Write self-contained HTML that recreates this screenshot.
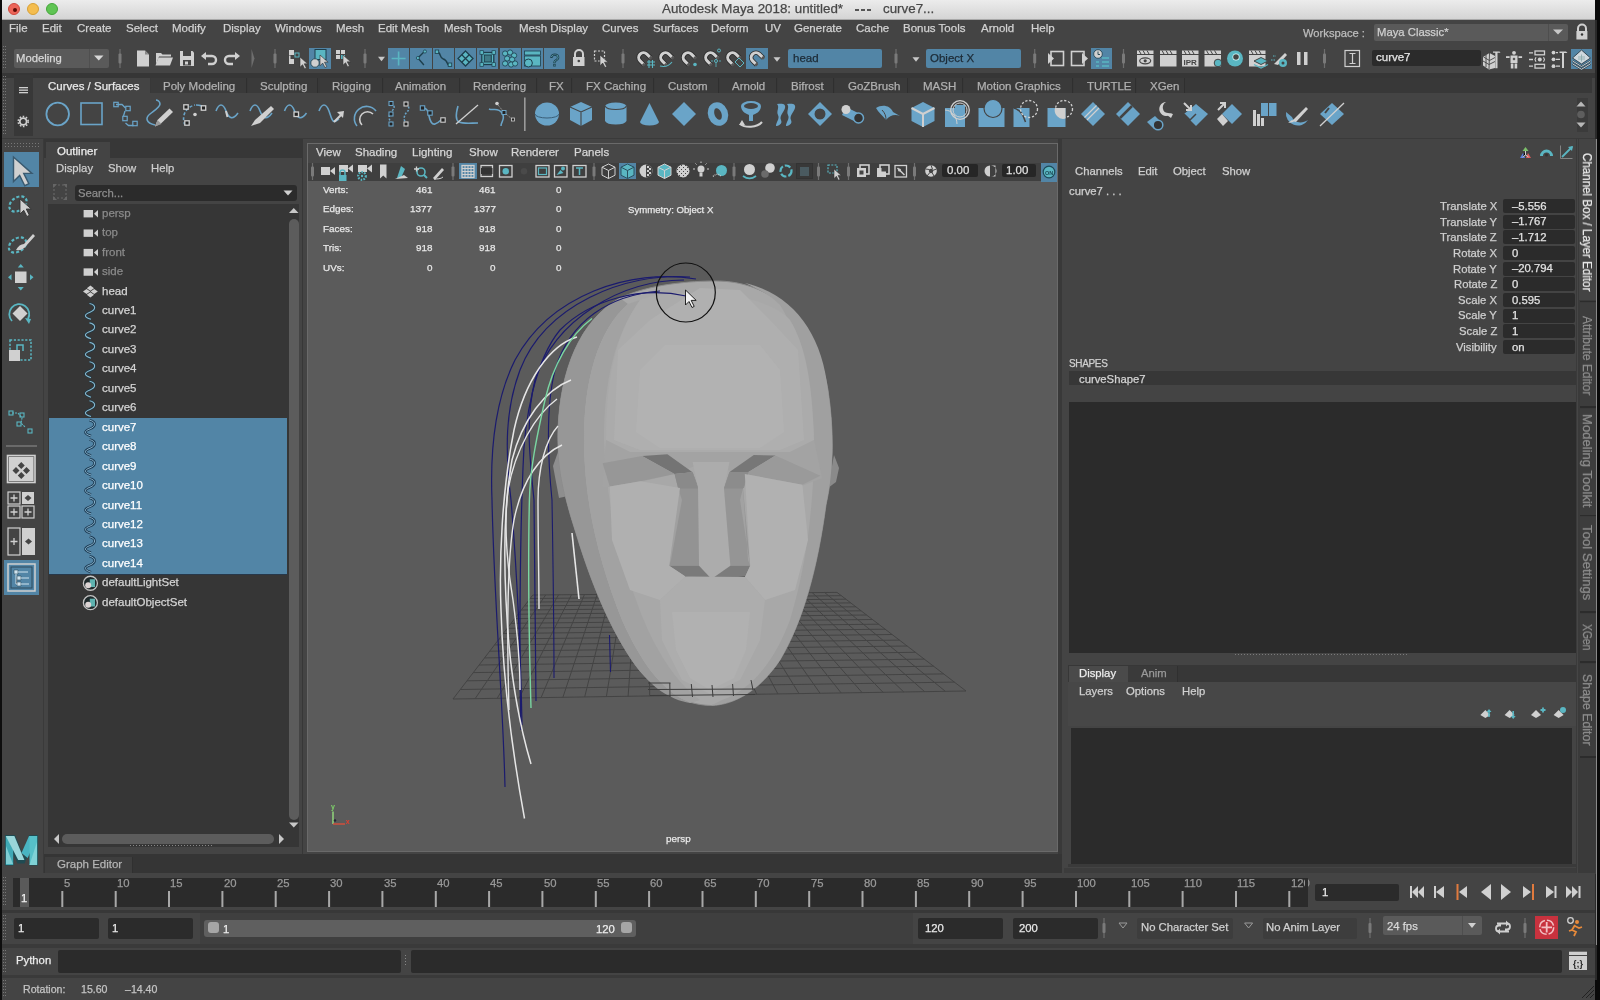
<!DOCTYPE html>
<html><head><meta charset="utf-8">
<style>
*{margin:0;padding:0;box-sizing:border-box}
html,body{width:1600px;height:1000px;overflow:hidden;background:#444;font-family:"Liberation Sans",sans-serif;font-size:11.3px;color:#c8c8c8}
.a{position:absolute}
.t{position:absolute;white-space:nowrap;line-height:1;-webkit-text-stroke:0.25px currentColor;will-change:transform}
svg{position:absolute;left:0;top:0;overflow:visible}
</style></head>
<body>
<div class="a" style="left:0px;top:0px;width:1600px;height:1000px;background:#444;"></div>
<div class="a" style="left:0px;top:0px;width:1595px;height:20px;background:linear-gradient(#ececec,#d3d3d3);"></div>
<div class="a" style="left:0px;top:19px;width:1595px;height:1px;background:#a8a8a8;"></div>
<div class="a" style="left:8px;top:3px;width:12px;height:12px;border-radius:50%;background:#ec6559;border:0.5px solid #d0493e"><div class="a" style="left:3.5px;top:3.5px;width:4px;height:4px;border-radius:50%;background:#5a0b05"></div></div>
<div class="a" style="left:27px;top:3px;width:12px;height:12px;border-radius:50%;background:#f4bd4f;border:0.5px solid #d8a035"></div>
<div class="a" style="left:46px;top:3px;width:12px;height:12px;border-radius:50%;background:#5fc453;border:0.5px solid #45a63a"></div>
<div class="t" style="left:662px;top:2.30px;font-size:13.35px;color:#484848;">Autodesk Maya 2018: untitled*</div>
<div class="a" style="left:854.5px;top:9.3px;width:4px;height:1.3px;background:#555"></div><div class="a" style="left:860.5px;top:9.3px;width:4px;height:1.3px;background:#555"></div><div class="a" style="left:866.5px;top:9.3px;width:4px;height:1.3px;background:#555"></div>
<div class="t" style="left:882.5px;top:2.30px;font-size:13.35px;color:#484848;">curve7...</div>
<div class="a" style="left:0px;top:0px;width:2px;height:1000px;background:#0e0e0e;"></div>
<div class="a" style="left:1595px;top:0px;width:5px;height:1000px;background:#0a0a0a;"></div>
<div class="a" style="left:1595px;top:20px;width:2px;height:960px;background:#2a2a2a;"></div>
<div class="t" style="left:9px;top:23.27px;font-size:11.5px;color:#d2d2d2;">File</div>
<div class="t" style="left:42px;top:23.27px;font-size:11.5px;color:#d2d2d2;">Edit</div>
<div class="t" style="left:76.75px;top:23.27px;font-size:11.5px;color:#d2d2d2;">Create</div>
<div class="t" style="left:125.75px;top:23.27px;font-size:11.5px;color:#d2d2d2;">Select</div>
<div class="t" style="left:172px;top:23.27px;font-size:11.5px;color:#d2d2d2;">Modify</div>
<div class="t" style="left:222.5px;top:23.27px;font-size:11.5px;color:#d2d2d2;">Display</div>
<div class="t" style="left:275px;top:23.27px;font-size:11.5px;color:#d2d2d2;">Windows</div>
<div class="t" style="left:336.25px;top:23.27px;font-size:11.5px;color:#d2d2d2;">Mesh</div>
<div class="t" style="left:378.25px;top:23.27px;font-size:11.5px;color:#d2d2d2;">Edit Mesh</div>
<div class="t" style="left:444px;top:23.27px;font-size:11.5px;color:#d2d2d2;">Mesh Tools</div>
<div class="t" style="left:518.5px;top:23.27px;font-size:11.5px;color:#d2d2d2;">Mesh Display</div>
<div class="t" style="left:602px;top:23.27px;font-size:11.5px;color:#d2d2d2;">Curves</div>
<div class="t" style="left:652.5px;top:23.27px;font-size:11.5px;color:#d2d2d2;">Surfaces</div>
<div class="t" style="left:711.25px;top:23.27px;font-size:11.5px;color:#d2d2d2;">Deform</div>
<div class="t" style="left:765px;top:23.27px;font-size:11.5px;color:#d2d2d2;">UV</div>
<div class="t" style="left:794px;top:23.27px;font-size:11.5px;color:#d2d2d2;">Generate</div>
<div class="t" style="left:855.5px;top:23.27px;font-size:11.5px;color:#d2d2d2;">Cache</div>
<div class="t" style="left:902.5px;top:23.27px;font-size:11.5px;color:#d2d2d2;">Bonus Tools</div>
<div class="t" style="left:980.5px;top:23.27px;font-size:11.5px;color:#d2d2d2;">Arnold</div>
<div class="t" style="left:1030.5px;top:23.27px;font-size:11.5px;color:#d2d2d2;">Help</div>
<div class="t" style="left:1303px;top:27.52px;font-size:11.2px;color:#bdbdbd;">Workspace :</div>
<div class="a" style="left:1374px;top:24px;width:194px;height:17px;background:#5a5a5a;border-radius:2px"></div>
<div class="a" style="left:1548px;top:24px;width:1px;height:17px;background:#4e4e4e;"></div>
<svg width="1600" height="1000"><path d="M1553 29.5h10l-5 5z" fill="#c8c8c8"/></svg>
<div class="t" style="left:1377px;top:27.43px;font-size:11.3px;color:#cfcfcf;">Maya Classic*</div>
<div class="a" style="left:2px;top:41px;width:1593px;height:31px;background:#444;"></div>
<svg width="1600" height="1000"><path d="M3.5 46.0v24.0" stroke="#777" stroke-width="1" stroke-dasharray="1 2"/><path d="M5.5 46.0v24.0" stroke="#777" stroke-width="1" stroke-dasharray="1 2"/></svg>
<div class="a" style="left:13.5px;top:49px;width:95px;height:19px;background:#5a5a5a;border-radius:2px"></div>
<div class="a" style="left:89px;top:49px;width:1px;height:19px;background:#4f4f4f;"></div>
<svg width="1600" height="1000"><path d="M94 55.5h9.5l-4.75 5z" fill="#d8d8d8"/></svg>
<div class="t" style="left:16px;top:52.93px;font-size:11.3px;color:#d8d8d8;">Modeling</div>
<div class="a" style="left:388.0px;top:48px;width:21.3px;height:21.2px;background:#5285a6;"></div>
<div class="a" style="left:410.3px;top:48px;width:21.3px;height:21.2px;background:#5285a6;"></div>
<div class="a" style="left:432.6px;top:48px;width:21.3px;height:21.2px;background:#5285a6;"></div>
<div class="a" style="left:454.9px;top:48px;width:21.3px;height:21.2px;background:#5285a6;"></div>
<div class="a" style="left:477.2px;top:48px;width:21.3px;height:21.2px;background:#5285a6;"></div>
<div class="a" style="left:499.5px;top:48px;width:21.3px;height:21.2px;background:#5285a6;"></div>
<div class="a" style="left:521.8px;top:48px;width:21.3px;height:21.2px;background:#5285a6;"></div>
<div class="a" style="left:544.1px;top:48px;width:21.3px;height:21.2px;background:#5285a6;"></div>
<div class="a" style="left:309px;top:47.6px;width:21.6px;height:21.6px;background:#5285a6;"></div>
<div class="a" style="left:746px;top:48px;width:22px;height:21px;background:#5285a6;"></div>
<div class="a" style="left:1091px;top:48px;width:21px;height:21px;background:#5285a6;"></div>
<div class="a" style="left:1571px;top:49px;width:21px;height:20px;background:#5285a6;"></div>
<div class="a" style="left:787.5px;top:49px;width:94.5px;height:18.7px;background:#5285a6;border-radius:2px"></div>
<div class="t" style="left:793px;top:52.77px;font-size:11.5px;color:#1d2b36;">head</div>
<div class="a" style="left:926px;top:49px;width:94.6px;height:18.7px;background:#5285a6;border-radius:2px"></div>
<div class="t" style="left:930px;top:52.77px;font-size:11.5px;color:#1d2b36;">Object X</div>
<div class="a" style="left:1372px;top:49.6px;width:108.8px;height:16px;background:#2b2b2b;border-radius:2px"></div>
<div class="t" style="left:1376px;top:52.27px;font-size:11.5px;color:#e6e6e6;">curve7</div>
<div class="a" style="left:2px;top:74px;width:1593px;height:64px;background:#444;"></div>
<div class="a" style="left:2px;top:72.5px;width:1593px;height:5px;background:#363636;"></div>
<svg width="1600" height="1000"><path d="M3.5 76.0v58.0" stroke="#777" stroke-width="1" stroke-dasharray="1 2"/><path d="M5.5 76.0v58.0" stroke="#777" stroke-width="1" stroke-dasharray="1 2"/></svg>
<div class="a" style="left:13.6px;top:75px;width:19.6px;height:61px;background:#383838;"></div>
<svg width="1600" height="1000"><g fill="#d0d0d0"><rect x="19" y="87" width="9" height="1.3"/><rect x="19" y="89.5" width="9" height="1.3"/><rect x="19" y="92" width="9" height="1.3"/></g><circle cx="23.2" cy="121.5" r="3.4" fill="none" stroke="#d0d0d0" stroke-width="1.8"/><circle cx="23.2" cy="121.5" r="5" fill="none" stroke="#d0d0d0" stroke-width="1.6" stroke-dasharray="1.6 1.6"/></svg>
<div class="a" style="left:38px;top:77.5px;width:1554px;height:15.5px;background:#383838;"></div>
<div class="a" style="left:37.5px;top:77.5px;width:112.5px;height:16.5px;background:#444;"></div>
<div class="t" style="left:47.8px;top:80.77px;font-size:11.5px;color:#e8e8e8;">Curves / Surfaces</div>
<div class="a" style="left:150.5px;top:77.5px;width:96.6px;height:15.5px;background:#3a3a3a;border-right:1px solid #2f2f2f"></div>
<div class="t" style="left:163px;top:80.77px;font-size:11.5px;color:#b0b0b0;">Poly Modeling</div>
<div class="a" style="left:248.1px;top:77.5px;width:70.4px;height:15.5px;background:#3a3a3a;border-right:1px solid #2f2f2f"></div>
<div class="t" style="left:259.8px;top:80.77px;font-size:11.5px;color:#b0b0b0;">Sculpting</div>
<div class="a" style="left:319.5px;top:77.5px;width:63px;height:15.5px;background:#3a3a3a;border-right:1px solid #2f2f2f"></div>
<div class="t" style="left:331.6px;top:80.77px;font-size:11.5px;color:#b0b0b0;">Rigging</div>
<div class="a" style="left:383.5px;top:77.5px;width:76px;height:15.5px;background:#3a3a3a;border-right:1px solid #2f2f2f"></div>
<div class="t" style="left:395px;top:80.77px;font-size:11.5px;color:#b0b0b0;">Animation</div>
<div class="a" style="left:460.5px;top:77.5px;width:76px;height:15.5px;background:#3a3a3a;border-right:1px solid #2f2f2f"></div>
<div class="t" style="left:472.8px;top:80.77px;font-size:11.5px;color:#b0b0b0;">Rendering</div>
<div class="a" style="left:537.5px;top:77.5px;width:34.60000000000002px;height:15.5px;background:#3a3a3a;border-right:1px solid #2f2f2f"></div>
<div class="t" style="left:549px;top:80.77px;font-size:11.5px;color:#b0b0b0;">FX</div>
<div class="a" style="left:573.1px;top:77.5px;width:81.10000000000002px;height:15.5px;background:#3a3a3a;border-right:1px solid #2f2f2f"></div>
<div class="t" style="left:585.8px;top:80.77px;font-size:11.5px;color:#b0b0b0;">FX Caching</div>
<div class="a" style="left:655.2px;top:77.5px;width:63.799999999999955px;height:15.5px;background:#3a3a3a;border-right:1px solid #2f2f2f"></div>
<div class="t" style="left:667.8px;top:80.77px;font-size:11.5px;color:#b0b0b0;">Custom</div>
<div class="a" style="left:720.0px;top:77.5px;width:57.10000000000002px;height:15.5px;background:#3a3a3a;border-right:1px solid #2f2f2f"></div>
<div class="t" style="left:731.6px;top:80.77px;font-size:11.5px;color:#b0b0b0;">Arnold</div>
<div class="a" style="left:778.1px;top:77.5px;width:56.19999999999993px;height:15.5px;background:#3a3a3a;border-right:1px solid #2f2f2f"></div>
<div class="t" style="left:790.7px;top:80.77px;font-size:11.5px;color:#b0b0b0;">Bifrost</div>
<div class="a" style="left:835.3px;top:77.5px;width:73.20000000000005px;height:15.5px;background:#3a3a3a;border-right:1px solid #2f2f2f"></div>
<div class="t" style="left:848px;top:80.77px;font-size:11.5px;color:#b0b0b0;">GoZBrush</div>
<div class="a" style="left:909.5px;top:77.5px;width:53.799999999999955px;height:15.5px;background:#3a3a3a;border-right:1px solid #2f2f2f"></div>
<div class="t" style="left:922.5px;top:80.77px;font-size:11.5px;color:#b0b0b0;">MASH</div>
<div class="a" style="left:964.3px;top:77.5px;width:108.70000000000005px;height:15.5px;background:#3a3a3a;border-right:1px solid #2f2f2f"></div>
<div class="t" style="left:977px;top:80.77px;font-size:11.5px;color:#b0b0b0;">Motion Graphics</div>
<div class="a" style="left:1074.0px;top:77.5px;width:61.90000000000009px;height:15.5px;background:#3a3a3a;border-right:1px solid #2f2f2f"></div>
<div class="t" style="left:1086.7px;top:80.77px;font-size:11.5px;color:#b0b0b0;">TURTLE</div>
<div class="a" style="left:1136.9px;top:77.5px;width:48.19999999999982px;height:15.5px;background:#3a3a3a;border-right:1px solid #2f2f2f"></div>
<div class="t" style="left:1149.5px;top:80.77px;font-size:11.5px;color:#b0b0b0;">XGen</div>
<div class="a" style="left:38px;top:93px;width:1540px;height:1px;background:#444;"></div>
<div class="a" style="left:1576.5px;top:98px;width:11.5px;height:33.5px;background:#3b3b3b;"></div>
<svg width="1600" height="1000"><path d="M1576.5 106.5h9l-4.5-5z" fill="#b8b8b8"/><circle cx="1581" cy="114.5" r="3.8" fill="#5e5e5e"/><path d="M1576.5 122.5h9l-4.5 5z" fill="#b8b8b8"/></svg>
<div class="a" style="left:2px;top:137.5px;width:1593px;height:2px;background:#3a3a3a;"></div>
<div class="a" style="left:2px;top:139px;width:41px;height:734px;background:#444;"></div>
<div class="a" style="left:43px;top:139px;width:1px;height:734px;background:#3a3a3a;"></div>
<svg width="1600" height="1000"><path d="M5.0 143.5h34.0" stroke="#777" stroke-width="1" stroke-dasharray="1 2"/><path d="M5.0 146.5h34.0" stroke="#777" stroke-width="1" stroke-dasharray="1 2"/></svg>
<div class="a" style="left:4px;top:152px;width:35px;height:35px;background:#5285a6;"></div>
<div class="a" style="left:4px;top:560px;width:35px;height:35px;background:#5285a6;"></div>
<div class="a" style="left:6px;top:445px;width:31px;height:1.5px;background:#6a6a6a;"></div>
<div class="a" style="left:44px;top:139px;width:260px;height:716px;background:#444;"></div>
<div class="a" style="left:44px;top:139px;width:258px;height:19px;background:#373737;"></div>
<div class="a" style="left:46px;top:142px;width:64px;height:17px;background:#444;"></div>
<div class="t" style="left:57px;top:145.77px;font-size:11.5px;color:#ececec;">Outliner</div>
<div class="t" style="left:55.5px;top:163.43px;font-size:11.3px;color:#cdcdcd;">Display</div>
<div class="t" style="left:107.5px;top:163.43px;font-size:11.3px;color:#cdcdcd;">Show</div>
<div class="t" style="left:150.5px;top:163.43px;font-size:11.3px;color:#cdcdcd;">Help</div>
<div class="a" style="left:75px;top:184.5px;width:222px;height:16.5px;background:#2b2b2b;border-radius:3px"></div>
<div class="t" style="left:78px;top:187.93px;font-size:11.3px;color:#8d8d8d;">Search...</div>
<svg width="1600" height="1000"><path d="M283.5 190.5h9l-4.5 5z" fill="#d0d0d0"/></svg>
<div class="a" style="left:48px;top:203.5px;width:241px;height:631px;background:#363636;"></div>
<div class="a" style="left:289px;top:203.5px;width:10px;height:631px;background:#363636;"></div>
<div class="a" style="left:288.5px;top:219px;width:10px;height:600.5px;background:#5c5c5c;border-radius:5px"></div>
<div class="a" style="left:48px;top:831px;width:251px;height:16px;background:#363636;"></div>
<svg width="1600" height="1000"><path d="M289 213h9.5l-4.75-5z" fill="#c8c8c8"/><path d="M289 822.5h9.5l-4.75 5z" fill="#c8c8c8"/><path d="M59 834v10l-5-5z" fill="#c8c8c8"/><path d="M279 834v10l5-5z" fill="#c8c8c8"/></svg>
<div class="a" style="left:61.6px;top:834px;width:212.5px;height:10px;background:#5c5c5c;border-radius:5px"></div>
<svg width="1600" height="1000"><path d="M130.0 845.5h84.0" stroke="#888" stroke-width="1" stroke-dasharray="1 2"/></svg>
<div class="a" style="left:48.5px;top:418.4px;width:238.5px;height:156.6px;background:#5285a6;border-bottom:1px solid #27384a"></div>
<div class="t" style="left:101.5px;top:207.77px;font-size:11.5px;color:#8a8a8a;">persp</div>
<div class="t" style="left:101.5px;top:227.22px;font-size:11.5px;color:#8a8a8a;">top</div>
<div class="t" style="left:101.5px;top:246.67px;font-size:11.5px;color:#8a8a8a;">front</div>
<div class="t" style="left:101.5px;top:266.12px;font-size:11.5px;color:#8a8a8a;">side</div>
<div class="t" style="left:101.5px;top:285.57px;font-size:11.5px;color:#d4d4d4;">head</div>
<div class="t" style="left:101.5px;top:305.02px;font-size:11.5px;color:#d4d4d4;">curve1</div>
<div class="t" style="left:101.5px;top:324.47px;font-size:11.5px;color:#d4d4d4;">curve2</div>
<div class="t" style="left:101.5px;top:343.92px;font-size:11.5px;color:#d4d4d4;">curve3</div>
<div class="t" style="left:101.5px;top:363.37px;font-size:11.5px;color:#d4d4d4;">curve4</div>
<div class="t" style="left:101.5px;top:382.82px;font-size:11.5px;color:#d4d4d4;">curve5</div>
<div class="t" style="left:101.5px;top:402.27px;font-size:11.5px;color:#d4d4d4;">curve6</div>
<div class="t" style="left:101.5px;top:421.72px;font-size:11.5px;color:#ffffff;">curve7</div>
<div class="t" style="left:101.5px;top:441.17px;font-size:11.5px;color:#ffffff;">curve8</div>
<div class="t" style="left:101.5px;top:460.62px;font-size:11.5px;color:#ffffff;">curve9</div>
<div class="t" style="left:101.5px;top:480.07px;font-size:11.5px;color:#ffffff;">curve10</div>
<div class="t" style="left:101.5px;top:499.52px;font-size:11.5px;color:#ffffff;">curve11</div>
<div class="t" style="left:101.5px;top:518.97px;font-size:11.5px;color:#ffffff;">curve12</div>
<div class="t" style="left:101.5px;top:538.42px;font-size:11.5px;color:#ffffff;">curve13</div>
<div class="t" style="left:101.5px;top:557.87px;font-size:11.5px;color:#ffffff;">curve14</div>
<div class="t" style="left:101.5px;top:577.32px;font-size:11.5px;color:#d4d4d4;">defaultLightSet</div>
<div class="t" style="left:101.5px;top:596.77px;font-size:11.5px;color:#d4d4d4;">defaultObjectSet</div>
<div class="a" style="left:302px;top:139px;width:1px;height:716px;background:#373737;"></div>
<div class="a" style="left:303px;top:139px;width:759px;height:716px;background:#444;"></div>
<div class="a" style="left:307px;top:143px;width:751px;height:709px;background:#6a6a6a;"></div>
<div class="a" style="left:308px;top:144px;width:749px;height:707px;background:#5b5b5b;"></div>
<div class="a" style="left:308px;top:144px;width:749px;height:18.5px;background:#474747;"></div>
<div class="a" style="left:308px;top:162.5px;width:749px;height:18.5px;background:#3f3f3f;"></div>
<div class="t" style="left:315.9px;top:147.27px;font-size:11.5px;color:#d6d6d6;">View</div>
<div class="t" style="left:354.7px;top:147.27px;font-size:11.5px;color:#d6d6d6;">Shading</div>
<div class="t" style="left:411.5px;top:147.27px;font-size:11.5px;color:#d6d6d6;">Lighting</div>
<div class="t" style="left:469px;top:147.27px;font-size:11.5px;color:#d6d6d6;">Show</div>
<div class="t" style="left:511.3px;top:147.27px;font-size:11.5px;color:#d6d6d6;">Renderer</div>
<div class="t" style="left:573.6px;top:147.27px;font-size:11.5px;color:#d6d6d6;">Panels</div>
<div class="a" style="left:942px;top:164.3px;width:35.5px;height:12.4px;background:#262626;border-radius:2px"></div>
<div class="t" style="left:947px;top:165.27px;font-size:11.5px;color:#e0e0e0;">0.00</div>
<div class="a" style="left:1001.7px;top:164.3px;width:34.8px;height:12.4px;background:#262626;border-radius:2px"></div>
<div class="t" style="left:1006px;top:165.27px;font-size:11.5px;color:#e0e0e0;">1.00</div>
<div class="a" style="left:1040.8px;top:163px;width:16.5px;height:18.5px;background:#5285a6;"></div>
<div class="a" style="left:459px;top:163.4px;width:17.6px;height:16px;background:#5285a6;"></div>
<div class="a" style="left:619px;top:163.4px;width:17px;height:16px;background:#5285a6;"></div>
<div class="a" style="left:796.3px;top:163.4px;width:16.7px;height:16px;background:#383838;border:1px solid #333"></div>
<div class="a" style="left:1062px;top:139px;width:516px;height:526px;background:#444;"></div>
<div class="a" style="left:1058px;top:139px;width:4px;height:716px;background:#393939;"></div>
<div class="t" style="left:1075px;top:166.43px;font-size:11.3px;color:#d0d0d0;">Channels</div>
<div class="t" style="left:1138px;top:166.43px;font-size:11.3px;color:#d0d0d0;">Edit</div>
<div class="t" style="left:1172.5px;top:166.43px;font-size:11.3px;color:#d0d0d0;">Object</div>
<div class="t" style="left:1221.5px;top:166.43px;font-size:11.3px;color:#d0d0d0;">Show</div>
<div class="t" style="left:1069px;top:186.43px;font-size:11.3px;color:#d0d0d0;">curve7 . . .</div>
<div class="a" style="left:1503px;top:199.0px;width:72px;height:14.2px;background:#2b2b2b;border-radius:2px"></div>
<div class="t" style="right:103px;top:200.93px;font-size:11.3px;color:#cfcfcf;text-align:right;">Translate X</div>
<div class="t" style="left:1511.5px;top:200.73px;font-size:11.3px;color:#e2e2e2;">&#8211;5.556</div>
<div class="a" style="left:1503px;top:214.65px;width:72px;height:14.2px;background:#2b2b2b;border-radius:2px"></div>
<div class="t" style="right:103px;top:216.58px;font-size:11.3px;color:#cfcfcf;text-align:right;">Translate Y</div>
<div class="t" style="left:1511.5px;top:216.38px;font-size:11.3px;color:#e2e2e2;">&#8211;1.767</div>
<div class="a" style="left:1503px;top:230.3px;width:72px;height:14.2px;background:#2b2b2b;border-radius:2px"></div>
<div class="t" style="right:103px;top:232.23px;font-size:11.3px;color:#cfcfcf;text-align:right;">Translate Z</div>
<div class="t" style="left:1511.5px;top:232.03px;font-size:11.3px;color:#e2e2e2;">&#8211;1.712</div>
<div class="a" style="left:1503px;top:245.95px;width:72px;height:14.2px;background:#2b2b2b;border-radius:2px"></div>
<div class="t" style="right:103px;top:247.88px;font-size:11.3px;color:#cfcfcf;text-align:right;">Rotate X</div>
<div class="t" style="left:1511.5px;top:247.68px;font-size:11.3px;color:#e2e2e2;">0</div>
<div class="a" style="left:1503px;top:261.6px;width:72px;height:14.2px;background:#2b2b2b;border-radius:2px"></div>
<div class="t" style="right:103px;top:263.53px;font-size:11.3px;color:#cfcfcf;text-align:right;">Rotate Y</div>
<div class="t" style="left:1511.5px;top:263.33px;font-size:11.3px;color:#e2e2e2;">&#8211;20.794</div>
<div class="a" style="left:1503px;top:277.25px;width:72px;height:14.2px;background:#2b2b2b;border-radius:2px"></div>
<div class="t" style="right:103px;top:279.18px;font-size:11.3px;color:#cfcfcf;text-align:right;">Rotate Z</div>
<div class="t" style="left:1511.5px;top:278.98px;font-size:11.3px;color:#e2e2e2;">0</div>
<div class="a" style="left:1503px;top:292.9px;width:72px;height:14.2px;background:#2b2b2b;border-radius:2px"></div>
<div class="t" style="right:103px;top:294.83px;font-size:11.3px;color:#cfcfcf;text-align:right;">Scale X</div>
<div class="t" style="left:1511.5px;top:294.63px;font-size:11.3px;color:#e2e2e2;">0.595</div>
<div class="a" style="left:1503px;top:308.55px;width:72px;height:14.2px;background:#2b2b2b;border-radius:2px"></div>
<div class="t" style="right:103px;top:310.48px;font-size:11.3px;color:#cfcfcf;text-align:right;">Scale Y</div>
<div class="t" style="left:1511.5px;top:310.28px;font-size:11.3px;color:#e2e2e2;">1</div>
<div class="a" style="left:1503px;top:324.2px;width:72px;height:14.2px;background:#2b2b2b;border-radius:2px"></div>
<div class="t" style="right:103px;top:326.13px;font-size:11.3px;color:#cfcfcf;text-align:right;">Scale Z</div>
<div class="t" style="left:1511.5px;top:325.93px;font-size:11.3px;color:#e2e2e2;">1</div>
<div class="a" style="left:1503px;top:339.85px;width:72px;height:14.2px;background:#2b2b2b;border-radius:2px"></div>
<div class="t" style="right:103px;top:341.78px;font-size:11.3px;color:#cfcfcf;text-align:right;">Visibility</div>
<div class="t" style="left:1511.5px;top:341.58px;font-size:11.3px;color:#e2e2e2;">on</div>
<div class="t" style="left:1069.4px;top:358.84px;font-size:10px;color:#d0d0d0;letter-spacing:-0.35px">SHAPES</div>
<div class="a" style="left:1068.75px;top:371px;width:507px;height:14px;background:#373737;"></div>
<div class="t" style="left:1079.4px;top:373.73px;font-size:11.3px;color:#d4d4d4;">curveShape7</div>
<div class="a" style="left:1068.75px;top:402px;width:507px;height:250.5px;background:#2b2b2b;"></div>
<svg width="1600" height="1000"><path d="M1235.0 654.5h172.0" stroke="#7a7a7a" stroke-width="1" stroke-dasharray="1 2"/></svg>
<div class="a" style="left:1062px;top:665px;width:516px;height:208px;background:#444;"></div>
<div class="a" style="left:1068px;top:665px;width:508px;height:16.5px;background:#373737;"></div>
<div class="a" style="left:1069.4px;top:665.5px;width:58.6px;height:16px;background:#4a4a4a;"></div>
<div class="a" style="left:1128px;top:666px;width:49.5px;height:15.5px;background:#3a3a3a;border-right:1px solid #303030"></div>
<div class="t" style="left:1079.4px;top:668.43px;font-size:11.3px;color:#ececec;">Display</div>
<div class="t" style="left:1140.6px;top:668.43px;font-size:11.3px;color:#9a9a9a;">Anim</div>
<div class="a" style="left:1067.5px;top:681.5px;width:508px;height:44px;background:#474747;"></div>
<div class="t" style="left:1078.5px;top:686.43px;font-size:11.3px;color:#d0d0d0;">Layers</div>
<div class="t" style="left:1126px;top:686.43px;font-size:11.3px;color:#d0d0d0;">Options</div>
<div class="t" style="left:1182px;top:686.43px;font-size:11.3px;color:#d0d0d0;">Help</div>
<div class="a" style="left:1071px;top:728px;width:501px;height:136px;background:#2b2b2b;"></div>
<div class="a" style="left:1067.5px;top:864px;width:508px;height:3px;background:#3a3a3a;"></div>
<div class="a" style="left:1064px;top:868px;width:514px;height:5px;background:#3c3c3c;"></div>
<div class="a" style="left:1576px;top:139px;width:20px;height:735px;background:#3a3a3a;"></div>
<div class="a" style="left:1577px;top:139px;width:1px;height:735px;background:#464646;"></div>
<div class="a" style="left:1578.5px;top:139px;width:17px;height:161px;background:#444;"></div>
<div class="a" style="left:1579.5px;top:303.1px;width:16px;height:103.59999999999997px;background:#3d3d3d;"></div>
<div class="a" style="left:1579.5px;top:408.7px;width:16px;height:106.40000000000003px;background:#3d3d3d;"></div>
<div class="a" style="left:1579.5px;top:517.1px;width:16px;height:94.39999999999998px;background:#3d3d3d;"></div>
<div class="a" style="left:1579.5px;top:613.5px;width:16px;height:48px;background:#3d3d3d;"></div>
<div class="a" style="left:1579.5px;top:663.5px;width:16px;height:93px;background:#3d3d3d;"></div>
<div class="a" style="left:1579.5px;top:300.8px;width:16px;height:1.6px;background:#2c2c2c;"></div>
<div class="a" style="left:1579.5px;top:406.4px;width:16px;height:1.6px;background:#2c2c2c;"></div>
<div class="a" style="left:1579.5px;top:514.8000000000001px;width:16px;height:1.6px;background:#2c2c2c;"></div>
<div class="a" style="left:1579.5px;top:611.2px;width:16px;height:1.6px;background:#2c2c2c;"></div>
<div class="a" style="left:1579.5px;top:661.2px;width:16px;height:1.6px;background:#2c2c2c;"></div>
<div class="a" style="left:1579.5px;top:756.2px;width:16px;height:1.6px;background:#2c2c2c;"></div>
<div class="t" style="left:1593px;top:152.6px;font-size:12px;color:#e8e8e8;transform-origin:0 0;transform:rotate(90deg) scaleX(0.965)">Channel Box / Layer Editor</div>
<div class="t" style="left:1593px;top:316px;font-size:12px;color:#8c8c8c;transform-origin:0 0;transform:rotate(90deg) scaleX(0.997)">Attribute Editor</div>
<div class="t" style="left:1593px;top:414.4px;font-size:12px;color:#8c8c8c;transform-origin:0 0;transform:rotate(90deg) scaleX(1.088)">Modeling Toolkit</div>
<div class="t" style="left:1593px;top:524.7px;font-size:12px;color:#8c8c8c;transform-origin:0 0;transform:rotate(90deg) scaleX(1.096)">Tool Settings</div>
<div class="t" style="left:1593px;top:623.6px;font-size:12px;color:#8c8c8c;transform-origin:0 0;transform:rotate(90deg) scaleX(0.860)">XGen</div>
<div class="t" style="left:1593px;top:674.2px;font-size:12px;color:#8c8c8c;transform-origin:0 0;transform:rotate(90deg) scaleX(1.030)">Shape Editor</div>
<div class="a" style="left:1595.5px;top:139px;width:1.2px;height:806px;background:#8a8a8a;"></div>
<svg width="1600" height="1000"><rect x="83.6" y="210.0" width="9.4" height="7.4" fill="#cfcfcf"/><path d="M94 213.7l4-3.7v7.4z" fill="#cfcfcf"/><rect x="83.6" y="229.45" width="9.4" height="7.4" fill="#cfcfcf"/><path d="M94 233.14999999999998l4-3.7v7.4z" fill="#cfcfcf"/><rect x="83.6" y="248.9" width="9.4" height="7.4" fill="#cfcfcf"/><path d="M94 252.6l4-3.7v7.4z" fill="#cfcfcf"/><rect x="83.6" y="268.34999999999997" width="9.4" height="7.4" fill="#cfcfcf"/><path d="M94 272.04999999999995l4-3.7v7.4z" fill="#cfcfcf"/><path d="M90.4 285.59999999999997l3.6 2.6-3.6 2.6-3.6-2.6z" fill="#cfcfcf"/><path d="M86.60000000000001 288.9l3.6 2.6-3.6 2.6-3.6-2.6z" fill="#cfcfcf"/><path d="M94.2 288.9l3.6 2.6-3.6 2.6-3.6-2.6z" fill="#cfcfcf"/><path d="M90.4 292.2l3.6 2.6-3.6 2.6-3.6-2.6z" fill="#cfcfcf"/><path d="M89.5 303.45C96.5 304.95 96 309.95 90 312.15S83.5 316.95 91 319.34999999999997" fill="none" stroke="#203844" stroke-width="2.4"/><path d="M89.5 303.45C96.5 304.95 96 309.95 90 312.15S83.5 316.95 91 319.34999999999997" fill="none" stroke="#86b8cf" stroke-width="1.1"/><path d="M89.5 322.9C96.5 324.4 96 329.4 90 331.59999999999997S83.5 336.4 91 338.79999999999995" fill="none" stroke="#203844" stroke-width="2.4"/><path d="M89.5 322.9C96.5 324.4 96 329.4 90 331.59999999999997S83.5 336.4 91 338.79999999999995" fill="none" stroke="#86b8cf" stroke-width="1.1"/><path d="M89.5 342.35C96.5 343.85 96 348.85 90 351.05S83.5 355.85 91 358.25" fill="none" stroke="#203844" stroke-width="2.4"/><path d="M89.5 342.35C96.5 343.85 96 348.85 90 351.05S83.5 355.85 91 358.25" fill="none" stroke="#86b8cf" stroke-width="1.1"/><path d="M89.5 361.79999999999995C96.5 363.29999999999995 96 368.29999999999995 90 370.49999999999994S83.5 375.29999999999995 91 377.69999999999993" fill="none" stroke="#203844" stroke-width="2.4"/><path d="M89.5 361.79999999999995C96.5 363.29999999999995 96 368.29999999999995 90 370.49999999999994S83.5 375.29999999999995 91 377.69999999999993" fill="none" stroke="#86b8cf" stroke-width="1.1"/><path d="M89.5 381.25C96.5 382.75 96 387.75 90 389.95S83.5 394.75 91 397.15" fill="none" stroke="#203844" stroke-width="2.4"/><path d="M89.5 381.25C96.5 382.75 96 387.75 90 389.95S83.5 394.75 91 397.15" fill="none" stroke="#86b8cf" stroke-width="1.1"/><path d="M89.5 400.7C96.5 402.2 96 407.2 90 409.4S83.5 414.2 91 416.59999999999997" fill="none" stroke="#203844" stroke-width="2.4"/><path d="M89.5 400.7C96.5 402.2 96 407.2 90 409.4S83.5 414.2 91 416.59999999999997" fill="none" stroke="#86b8cf" stroke-width="1.1"/><path d="M89.5 420.15C96.5 421.65 96 426.65 90 428.84999999999997S83.5 433.65 91 436.04999999999995" fill="none" stroke="#1d3a52" stroke-width="2.6"/><path d="M89.5 420.15C96.5 421.65 96 426.65 90 428.84999999999997S83.5 433.65 91 436.04999999999995" fill="none" stroke="#8fbcd6" stroke-width="0.9"/><path d="M89.5 439.59999999999997C96.5 441.09999999999997 96 446.09999999999997 90 448.29999999999995S83.5 453.09999999999997 91 455.49999999999994" fill="none" stroke="#1d3a52" stroke-width="2.6"/><path d="M89.5 439.59999999999997C96.5 441.09999999999997 96 446.09999999999997 90 448.29999999999995S83.5 453.09999999999997 91 455.49999999999994" fill="none" stroke="#8fbcd6" stroke-width="0.9"/><path d="M89.5 459.04999999999995C96.5 460.54999999999995 96 465.54999999999995 90 467.74999999999994S83.5 472.54999999999995 91 474.94999999999993" fill="none" stroke="#1d3a52" stroke-width="2.6"/><path d="M89.5 459.04999999999995C96.5 460.54999999999995 96 465.54999999999995 90 467.74999999999994S83.5 472.54999999999995 91 474.94999999999993" fill="none" stroke="#8fbcd6" stroke-width="0.9"/><path d="M89.5 478.5C96.5 480.0 96 485.0 90 487.2S83.5 492.0 91 494.4" fill="none" stroke="#1d3a52" stroke-width="2.6"/><path d="M89.5 478.5C96.5 480.0 96 485.0 90 487.2S83.5 492.0 91 494.4" fill="none" stroke="#8fbcd6" stroke-width="0.9"/><path d="M89.5 497.95C96.5 499.45 96 504.45 90 506.65S83.5 511.45 91 513.85" fill="none" stroke="#1d3a52" stroke-width="2.6"/><path d="M89.5 497.95C96.5 499.45 96 504.45 90 506.65S83.5 511.45 91 513.85" fill="none" stroke="#8fbcd6" stroke-width="0.9"/><path d="M89.5 517.4C96.5 518.9 96 523.9 90 526.1S83.5 530.9 91 533.3" fill="none" stroke="#1d3a52" stroke-width="2.6"/><path d="M89.5 517.4C96.5 518.9 96 523.9 90 526.1S83.5 530.9 91 533.3" fill="none" stroke="#8fbcd6" stroke-width="0.9"/><path d="M89.5 536.8499999999999C96.5 538.3499999999999 96 543.3499999999999 90 545.55S83.5 550.3499999999999 91 552.7499999999999" fill="none" stroke="#1d3a52" stroke-width="2.6"/><path d="M89.5 536.8499999999999C96.5 538.3499999999999 96 543.3499999999999 90 545.55S83.5 550.3499999999999 91 552.7499999999999" fill="none" stroke="#8fbcd6" stroke-width="0.9"/><path d="M89.5 556.3C96.5 557.8 96 562.8 90 565.0S83.5 569.8 91 572.1999999999999" fill="none" stroke="#1d3a52" stroke-width="2.6"/><path d="M89.5 556.3C96.5 557.8 96 562.8 90 565.0S83.5 569.8 91 572.1999999999999" fill="none" stroke="#8fbcd6" stroke-width="0.9"/><circle cx="90.4" cy="583.25" r="7" fill="#1f2a2c" stroke="#c4c4c4" stroke-width="1.3"/><rect x="89.8" y="579.25" width="5.2" height="7.8" fill="#5fb3b0"/><circle cx="88.2" cy="585.25" r="3" fill="#ddd5d5"/><circle cx="90.4" cy="602.7" r="7" fill="#1f2a2c" stroke="#c4c4c4" stroke-width="1.3"/><rect x="89.8" y="598.7" width="5.2" height="7.8" fill="#5fb3b0"/><circle cx="88.2" cy="604.7" r="3" fill="#ddd5d5"/><rect x="54" y="185" width="12" height="13" fill="none" stroke="#666" stroke-width="1.2" stroke-dasharray="2 2"/><path d="M53 184l4 0-4 4zM67 184l-4 0 4 4zM53 200l4 0-4-4zM67 200l-4 0 4-4z" fill="#666"/></svg>
<div class="a" style="left:44px;top:853.75px;width:1018px;height:20px;background:#353535;"></div>
<div class="a" style="left:45px;top:857px;width:88px;height:16.75px;background:#3e3e3e;border-right:1px solid #303030"></div>
<div class="t" style="left:57px;top:859.27px;font-size:11.5px;color:#b4b4b4;">Graph Editor</div>
<div class="a" style="left:2px;top:872.5px;width:1593px;height:1px;background:#3a3a3a;"></div>
<div class="a" style="left:2px;top:873px;width:1593px;height:38px;background:#444;"></div>
<svg width="1600" height="1000"><path d="M3.5 877.0v30.0" stroke="#777" stroke-width="1" stroke-dasharray="1 2"/><path d="M5.5 877.0v30.0" stroke="#777" stroke-width="1" stroke-dasharray="1 2"/></svg>
<div class="a" style="left:12.75px;top:877.7px;width:1295px;height:29.3px;background:#2b2b2b;"></div>
<div class="a" style="left:19.5px;top:877.7px;width:9.3px;height:29.3px;background:#5a5a5a;"></div>
<div class="t" style="left:20.5px;top:893.43px;font-size:11.3px;color:#f0f0f0;">1</div>
<div class="t" style="left:63.6px;top:878.43px;font-size:11.3px;color:#999">5</div>
<div class="t" style="left:117.0px;top:878.43px;font-size:11.3px;color:#999">10</div>
<div class="t" style="left:170.3px;top:878.43px;font-size:11.3px;color:#999">15</div>
<div class="t" style="left:223.7px;top:878.43px;font-size:11.3px;color:#999">20</div>
<div class="t" style="left:277.0px;top:878.43px;font-size:11.3px;color:#999">25</div>
<div class="t" style="left:330.4px;top:878.43px;font-size:11.3px;color:#999">30</div>
<div class="t" style="left:383.7px;top:878.43px;font-size:11.3px;color:#999">35</div>
<div class="t" style="left:437.1px;top:878.43px;font-size:11.3px;color:#999">40</div>
<div class="t" style="left:490.4px;top:878.43px;font-size:11.3px;color:#999">45</div>
<div class="t" style="left:543.7px;top:878.43px;font-size:11.3px;color:#999">50</div>
<div class="t" style="left:597.1px;top:878.43px;font-size:11.3px;color:#999">55</div>
<div class="t" style="left:650.4px;top:878.43px;font-size:11.3px;color:#999">60</div>
<div class="t" style="left:703.8px;top:878.43px;font-size:11.3px;color:#999">65</div>
<div class="t" style="left:757.1px;top:878.43px;font-size:11.3px;color:#999">70</div>
<div class="t" style="left:810.5px;top:878.43px;font-size:11.3px;color:#999">75</div>
<div class="t" style="left:863.8px;top:878.43px;font-size:11.3px;color:#999">80</div>
<div class="t" style="left:917.2px;top:878.43px;font-size:11.3px;color:#999">85</div>
<div class="t" style="left:970.5px;top:878.43px;font-size:11.3px;color:#999">90</div>
<div class="t" style="left:1023.9px;top:878.43px;font-size:11.3px;color:#999">95</div>
<div class="t" style="left:1077.2px;top:878.43px;font-size:11.3px;color:#999">100</div>
<div class="t" style="left:1130.6px;top:878.43px;font-size:11.3px;color:#999">105</div>
<div class="t" style="left:1183.9px;top:878.43px;font-size:11.3px;color:#999">110</div>
<div class="t" style="left:1237.3px;top:878.43px;font-size:11.3px;color:#999">115</div>
<div class="t" style="left:1290.6px;top:878.43px;font-size:11.3px;color:#999">120</div>
<svg width="1600" height="1000"><rect x="61.3" y="891" width="2" height="16" fill="#a8a8a8"/><rect x="114.7" y="891" width="2" height="16" fill="#a8a8a8"/><rect x="168.0" y="891" width="2" height="16" fill="#a8a8a8"/><rect x="221.4" y="891" width="2" height="16" fill="#a8a8a8"/><rect x="274.7" y="891" width="2" height="16" fill="#a8a8a8"/><rect x="328.1" y="891" width="2" height="16" fill="#a8a8a8"/><rect x="381.4" y="891" width="2" height="16" fill="#a8a8a8"/><rect x="434.8" y="891" width="2" height="16" fill="#a8a8a8"/><rect x="488.1" y="891" width="2" height="16" fill="#a8a8a8"/><rect x="541.4" y="891" width="2" height="16" fill="#a8a8a8"/><rect x="594.8" y="891" width="2" height="16" fill="#a8a8a8"/><rect x="648.1" y="891" width="2" height="16" fill="#a8a8a8"/><rect x="701.5" y="891" width="2" height="16" fill="#a8a8a8"/><rect x="754.8" y="891" width="2" height="16" fill="#a8a8a8"/><rect x="808.2" y="891" width="2" height="16" fill="#a8a8a8"/><rect x="861.5" y="891" width="2" height="16" fill="#a8a8a8"/><rect x="914.9" y="891" width="2" height="16" fill="#a8a8a8"/><rect x="968.2" y="891" width="2" height="16" fill="#a8a8a8"/><rect x="1021.6" y="891" width="2" height="16" fill="#a8a8a8"/><rect x="1075.0" y="891" width="2" height="16" fill="#a8a8a8"/><rect x="1128.3" y="891" width="2" height="16" fill="#a8a8a8"/><rect x="1181.6" y="891" width="2" height="16" fill="#a8a8a8"/><rect x="1235.0" y="891" width="2" height="16" fill="#a8a8a8"/><rect x="1288.3" y="891" width="2" height="16" fill="#a8a8a8"/></svg>
<div class="a" style="left:1305px;top:877.7px;width:3px;height:29.3px;background:#2b2b2b;"></div>
<div class="a" style="left:1315px;top:884px;width:84px;height:16.5px;background:#2b2b2b;border-radius:2px"></div>
<div class="t" style="left:1322px;top:887.43px;font-size:11.3px;color:#e8e8e8;">1</div>
<div class="a" style="left:2px;top:910px;width:1593px;height:2.5px;background:#383838;"></div>
<div class="a" style="left:2px;top:913px;width:1593px;height:31px;background:#444;"></div>
<svg width="1600" height="1000"><path d="M3.5 915.0v27.0" stroke="#777" stroke-width="1" stroke-dasharray="1 2"/><path d="M5.5 915.0v27.0" stroke="#777" stroke-width="1" stroke-dasharray="1 2"/></svg>
<div class="a" style="left:14.25px;top:917.5px;width:84.75px;height:21px;background:#2b2b2b;border-radius:2px"></div>
<div class="t" style="left:18px;top:922.93px;font-size:11.3px;color:#e8e8e8;">1</div>
<div class="a" style="left:108px;top:917.5px;width:84.5px;height:21px;background:#2b2b2b;border-radius:2px"></div>
<div class="t" style="left:112px;top:922.93px;font-size:11.3px;color:#e8e8e8;">1</div>
<div class="a" style="left:200px;top:913px;width:712.5px;height:31px;background:#3f3f3f;"></div>
<div class="a" style="left:204px;top:919.5px;width:432px;height:17.2px;background:#5f5f5f;border-radius:3px"></div>
<div class="a" style="left:207.5px;top:921.5px;width:11.5px;height:11.5px;background:#a6a6a6;border-radius:3px"></div>
<div class="t" style="left:223px;top:923.93px;font-size:11.3px;color:#ececec;">1</div>
<div class="t" style="left:596px;top:923.93px;font-size:11.3px;color:#ececec;">120</div>
<div class="a" style="left:620.6px;top:921.5px;width:11.5px;height:11.5px;background:#a6a6a6;border-radius:3px"></div>
<div class="a" style="left:918.4px;top:917.5px;width:85px;height:21px;background:#2b2b2b;border-radius:2px"></div>
<div class="t" style="left:925px;top:922.93px;font-size:11.3px;color:#e8e8e8;">120</div>
<div class="a" style="left:1013px;top:917.5px;width:84.7px;height:21px;background:#2b2b2b;border-radius:2px"></div>
<div class="t" style="left:1019px;top:922.93px;font-size:11.3px;color:#e8e8e8;">200</div>
<div class="a" style="left:1136.5px;top:917.5px;width:96px;height:21px;background:#3d3d3d;border-radius:2px"></div>
<div class="t" style="left:1140.6px;top:922.43px;font-size:11.3px;color:#d0d0d0;">No Character Set</div>
<div class="a" style="left:1262.5px;top:917.5px;width:94.5px;height:21px;background:#3d3d3d;border-radius:2px"></div>
<div class="t" style="left:1266px;top:922.43px;font-size:11.3px;color:#d0d0d0;">No Anim Layer</div>
<div class="a" style="left:1383px;top:916px;width:98.8px;height:19px;background:#5a5a5a;border-radius:2px"></div>
<div class="a" style="left:1462px;top:916px;width:1px;height:19px;background:#4e4e4e;"></div>
<div class="t" style="left:1387px;top:920.93px;font-size:11.3px;color:#d8d8d8;">24 fps</div>
<div class="a" style="left:1535.4px;top:916px;width:22.6px;height:22.7px;background:#c8323e;"></div>
<div class="a" style="left:2px;top:944px;width:1593px;height:4px;background:#3a3a3a;"></div>
<div class="a" style="left:2px;top:948px;width:1593px;height:27px;background:#444;"></div>
<svg width="1600" height="1000"><path d="M3.5 950.0v23.0" stroke="#777" stroke-width="1" stroke-dasharray="1 2"/><path d="M5.5 950.0v23.0" stroke="#777" stroke-width="1" stroke-dasharray="1 2"/></svg>
<div class="t" style="left:15.75px;top:954.73px;font-size:11.3px;color:#ececec;">Python</div>
<div class="a" style="left:57.75px;top:950px;width:342.75px;height:22.5px;background:#2b2b2b;border-radius:2px"></div>
<div class="a" style="left:410.6px;top:950px;width:1151.8px;height:22.5px;background:#2b2b2b;border-radius:2px"></div>
<svg width="1600" height="1000"><path d="M405.5 955.0v12.0" stroke="#888" stroke-width="1" stroke-dasharray="1 2"/></svg>
<div class="a" style="left:2px;top:975px;width:1593px;height:3px;background:#3a3a3a;"></div>
<div class="a" style="left:2px;top:978px;width:1593px;height:22px;background:#444;"></div>
<svg width="1600" height="1000"><path d="M3.5 980.0v18.0" stroke="#777" stroke-width="1" stroke-dasharray="1 2"/><path d="M5.5 980.0v18.0" stroke="#777" stroke-width="1" stroke-dasharray="1 2"/></svg>
<div class="t" style="left:23.25px;top:984.03px;font-size:10.6px;color:#c4c4c4;">Rotation:</div>
<div class="t" style="left:81px;top:984.03px;font-size:10.6px;color:#c4c4c4;">15.60</div>
<div class="t" style="left:125px;top:984.03px;font-size:10.6px;color:#c4c4c4;">&#8211;14.40</div>
<svg width="1600" height="1000" style="clip-path:inset(181px 543px 149px 308px)"><path d="M532.8 595.0L453.0 699.0M545.7 594.9L475.1 698.7M558.6 594.8L497.2 698.3M571.5 594.7L519.2 698.0M584.4 594.6L541.1 697.6M597.2 594.4L562.9 697.3M610.1 594.3L584.7 696.9M622.9 594.2L606.4 696.6M635.6 594.1L628.1 696.3M648.4 594.0L649.7 695.9M661.1 593.9L671.2 695.6M673.8 593.8L692.7 695.3M686.5 593.7L714.1 694.9M699.2 593.6L735.4 694.6M711.8 593.5L756.7 694.3M724.4 593.4L777.9 693.9M737.0 593.3L799.0 693.6M749.6 593.1L820.1 693.3M762.1 593.0L841.1 692.9M774.7 592.9L862.1 692.6M787.2 592.8L883.0 692.3M799.7 592.7L903.8 692.0M812.1 592.6L924.6 691.6M824.6 592.5L945.3 691.3M837.0 592.4L966.0 691.0M532.8 595.0L837.0 592.4M530.1 598.5L841.4 595.7M527.3 602.1L845.9 599.2M524.4 605.9L850.7 602.9M521.3 610.0L855.8 606.8M518.1 614.2L861.1 610.8M514.7 618.6L866.6 615.0M511.1 623.3L872.5 619.5M507.3 628.3L878.7 624.2M503.3 633.5L885.2 629.2M499.0 639.0L892.1 634.5M494.5 644.9L899.4 640.1M489.7 651.2L907.2 646.0M484.6 657.9L915.4 652.3M479.1 665.0L924.2 659.1M473.3 672.6L933.6 666.2M467.0 680.8L943.6 673.9M460.3 689.5L954.4 682.1M453.0 699.0L966.0 691.0" stroke="#444444" stroke-width="1" fill="none"/><path d="M553 466L558 452L566 458L568 496L559 498Z" fill="#8e8e8e"/><path d="M834 455L839 468L836 482L828 488Z" fill="#8a8a8a"/><path d="M716 281C770 281 815 318 828 390C834 430 834 470 826 505C818 565 804 620 780 660C760 690 735 705 711 705.5C685 705 655 690 636 666C610 630 590 580 575 530C562 490 557 460 558 430C560 370 580 320 620 298C650 284 690 281 716 281Z" fill="#a8a8a8" stroke="#8a8a8a" stroke-width="1"/><path d="M558 430C560 370 580 320 620 298L628 304C598 330 584 380 584 440C584 500 598 560 622 620C640 660 660 690 690 703C670 700 650 686 636 666C610 630 590 580 575 530C562 490 557 460 558 430Z" fill="#979797"/><path d="M628 304C598 330 584 380 584 440C584 500 598 560 622 620C640 660 660 690 690 703L700 700C672 680 650 640 636 600C618 550 606 500 604 440C604 380 615 335 640 300Z" fill="#a2a2a2"/><path d="M745 283C795 295 822 335 828 390C834 430 834 470 826 505C818 565 804 620 780 660C760 690 735 705 711 705.5L722 700C752 690 775 660 790 620C805 570 812 520 814 460C815 410 808 350 780 305C770 295 760 290 745 283Z" fill="#a0a0a0"/><path d="M640 300C670 288 760 288 790 320C805 345 812 380 814 440L790 452L630 452L606 440C606 380 615 335 640 300Z" fill="#ababab"/><path d="M650 320L770 320L798 350L804 440L780 450L640 450L614 440L618 350Z" fill="#afafaf"/><path d="M665 345L760 345L780 370L784 432L760 448L660 448L636 432L640 370Z" fill="#b2b2b2"/><path d="M700 288L740 290L770 320L650 320Z" fill="#b0b0b0"/><path d="M606 440L630 452L790 452L814 440L822 478L802 486L744 474L700 464L675 474L640 482L602 488Z" fill="#a3a3a3"/><path d="M642.2 456L667.4 454.2L692.6 472.2L674.6 474Z" fill="#747474"/><path d="M753.8 455L775.4 455.5L748.4 472L729.5 472Z" fill="#777777"/><path d="M602.6 463.2L642 456L674.6 474L640.4 481.2L609.8 486.6Z" fill="#979797"/><path d="M775.4 455.5L820.4 475.8L802.4 484.8L744.8 474L748.4 472Z" fill="#9a9a9a"/><path d="M674.6 474L692.6 472.2L699 488.4L680 488Z" fill="#8c8c8c"/><path d="M729.5 472L748.4 472L744 488L724 488Z" fill="#8e8e8e"/><path d="M692.6 462L729.5 462L724 488L730.4 565.8L711.5 579L699 565.8L698 488Z" fill="#acacac"/><path d="M674.6 474L692.6 472.2L698 488.4L699 565.8L669.2 565.8L678.2 488.4Z" fill="#939393"/><path d="M674.6 474L692.6 472.2L698 488.4L678.2 488.4Z" fill="#8a8a8a"/><path d="M678.2 488.4L682 500L671 560L669.2 565.8Z" fill="#a0a0a0"/><path d="M729.5 472L748.4 472L743 488.4L750.2 565.8L730.4 565.8L724 488.4Z" fill="#959595"/><path d="M729.5 472L748.4 472L743 488.4L724 488.4Z" fill="#8c8c8c"/><path d="M743 488.4L748 560L750.2 565.8L740 500Z" fill="#a2a2a2"/><path d="M669.2 565.8L699 565.8L711.5 579L685.4 576.6Z" fill="#7a7a7a"/><path d="M730.4 565.8L750.2 565.8L745 577L711.5 579Z" fill="#7c7c7c"/><path d="M685 577L711.5 579.5L745 577" fill="none" stroke="#3a3a3a" stroke-width="0.8"/><path d="M609.8 486.6L640.4 481.2L680 488L669.2 565.8L685.4 576.6L660 600L630 590L612 540Z" fill="#b0b0b0"/><path d="M744.8 474L802.4 484.8L808 540L795 590L765 600L745 577L750.2 565.8Z" fill="#b1b1b1"/><path d="M660 600L685.4 576.6L745 577L765 600L760 640L740 680L710 694L682 680L662 640Z" fill="#adadad"/><path d="M672 612L750 612L746 650L734 678L710 690L690 678L676 650Z" fill="#b1b1b1"/><path d="M648 683L670.5 683M648 689.5L755 689M650 695.5L755 694.5M669.8 683L670 697M691.3 684L692.5 697M712 685L713 697M732.6 684L733.5 696M751 680L753 690" stroke="#3c3c3c" stroke-width="1" fill="none"/><path d="M696 279C630 268 550 295 515 360C495 400 490 450 492 500C494 600 503 700 505 787" stroke="#1b1b6e" stroke-width="1.2" fill="none"/><path d="M690 277C625 272 545 305 520 370C505 410 505 450 511 500C516 560 520 620 522 725" stroke="#1b1b6e" stroke-width="1.2" fill="none"/><path d="M684 280C620 280 555 320 535 380C525 420 530 460 534 500C535 560 535 640 536 701" stroke="#1b1b6e" stroke-width="1.2" fill="none"/><path d="M686 296C640 286 590 300 560 330C535 360 524 420 523 468C520 540 519 650 521 730" stroke="#1b1b6e" stroke-width="1.2" fill="none"/><path d="M660 291C610 295 570 320 555 370C545 410 548 460 552 500C553 560 554 620 554 678" stroke="#1b1b6e" stroke-width="1.1" fill="none"/><path d="M609.5 635L610.5 672" stroke="#1b1b6e" stroke-width="1.1" fill="none"/><path d="M577 337C550 345 525 380 514 430C502 490 499 560 501 610C503 680 512 750 524.5 818.5" stroke="#e6e6e6" stroke-width="1.5" fill="none"/><path d="M571 380C545 390 522 420 512 460C503 510 504 560 506 600C508 650 515 710 531 764" stroke="#e6e6e6" stroke-width="1.5" fill="none"/><path d="M557 399C535 415 515 450 508 490C503 530 508 570 513 600C517 630 520 660 520 690" stroke="#e6e6e6" stroke-width="1.4" fill="none"/><path d="M558 426C545 440 538 470 538 500C538 540 539 580 539 609" stroke="#e6e6e6" stroke-width="1.4" fill="none"/><path d="M562 445C540 455 522 480 514 520C507 560 507 640 509 710" stroke="#e6e6e6" stroke-width="1.4" fill="none"/><path d="M572 533L579 599" stroke="#e6e6e6" stroke-width="1.6" fill="none"/><path d="M592 318.5C570 335 553 365 545 400C536 440 530 470 529.4 500C528 560 529 640 531 708" stroke="#7ad6a2" stroke-width="1.4" fill="none"/><circle cx="685.8" cy="292.5" r="29.5" fill="none" stroke="#111" stroke-width="1.2"/><path d="M685.5 290v15l3.5-3.5 3 6 2.2-1.1-3-6h5z" fill="#f2f2f2" stroke="#111" stroke-width="0.9"/><path d="M333 811.5v12.5" stroke="#8ed07a" stroke-width="1.6"/><path d="M333 824h12" stroke="#d9503c" stroke-width="1.4"/><circle cx="335" cy="820.5" r="1.2" fill="#223"/><text x="333" y="809" font-size="7" font-weight="bold" font-family="Liberation Sans" text-anchor="middle" fill="#7fd46a">y</text><text x="347.6" y="823.5" font-size="7" font-weight="bold" font-family="Liberation Sans" text-anchor="middle" fill="#e04030">x</text></svg>
<div class="t" style="left:322.5px;top:184.87px;font-size:9.9px;color:#e8e8e8;">Verts:</div>
<div class="t" style="right:1168px;top:184.87px;font-size:9.9px;color:#e8e8e8;text-align:right;">461</div>
<div class="t" style="right:1104.5px;top:184.87px;font-size:9.9px;color:#e8e8e8;text-align:right;">461</div>
<div class="t" style="right:1039px;top:184.87px;font-size:9.9px;color:#e8e8e8;text-align:right;">0</div>
<div class="t" style="left:322.5px;top:204.37px;font-size:9.9px;color:#e8e8e8;">Edges:</div>
<div class="t" style="right:1168px;top:204.37px;font-size:9.9px;color:#e8e8e8;text-align:right;">1377</div>
<div class="t" style="right:1104.5px;top:204.37px;font-size:9.9px;color:#e8e8e8;text-align:right;">1377</div>
<div class="t" style="right:1039px;top:204.37px;font-size:9.9px;color:#e8e8e8;text-align:right;">0</div>
<div class="t" style="left:322.5px;top:223.87px;font-size:9.9px;color:#e8e8e8;">Faces:</div>
<div class="t" style="right:1168px;top:223.87px;font-size:9.9px;color:#e8e8e8;text-align:right;">918</div>
<div class="t" style="right:1104.5px;top:223.87px;font-size:9.9px;color:#e8e8e8;text-align:right;">918</div>
<div class="t" style="right:1039px;top:223.87px;font-size:9.9px;color:#e8e8e8;text-align:right;">0</div>
<div class="t" style="left:322.5px;top:243.37px;font-size:9.9px;color:#e8e8e8;">Tris:</div>
<div class="t" style="right:1168px;top:243.37px;font-size:9.9px;color:#e8e8e8;text-align:right;">918</div>
<div class="t" style="right:1104.5px;top:243.37px;font-size:9.9px;color:#e8e8e8;text-align:right;">918</div>
<div class="t" style="right:1039px;top:243.37px;font-size:9.9px;color:#e8e8e8;text-align:right;">0</div>
<div class="t" style="left:322.5px;top:262.87px;font-size:9.9px;color:#e8e8e8;">UVs:</div>
<div class="t" style="right:1168px;top:262.87px;font-size:9.9px;color:#e8e8e8;text-align:right;">0</div>
<div class="t" style="right:1104.5px;top:262.87px;font-size:9.9px;color:#e8e8e8;text-align:right;">0</div>
<div class="t" style="right:1039px;top:262.87px;font-size:9.9px;color:#e8e8e8;text-align:right;">0</div>
<div class="t" style="left:628px;top:204.87px;font-size:9.6px;color:#e8e8e8;">Symmetry: Object X</div>
<div class="t" style="left:665.5px;top:833.62px;font-size:9.9px;color:#e8e8e8;">persp</div>
<svg width="1600" height="1000"><rect x="119.4" y="49" width="1.2" height="19" fill="#6e6e6e"/><rect x="118.5" y="53.5" width="3" height="10" rx="1" fill="#7a7a7a"/><path d="M137 50.5h8l4 4v12h-12z" fill="#d0d0d0"/><path d="M145 50.5v4h4" fill="#888"/><path d="M156 53h5l1.5 1.5h8.5v2h-12l-3 8z" fill="#d0d0d0"/><path d="M158.5 57.5h14.5l-3 8h-14.5z" fill="#d0d0d0"/><path d="M180 51h12.5l1.5 1.5v13.5h-14z" fill="#d0d0d0"/><rect x="183" y="51" width="8" height="5" fill="#444"/><rect x="183" y="60" width="8" height="5.5" fill="#444"/><rect x="185" y="61.5" width="3" height="3" fill="#d0d0d0"/><path d="M203 56h9a4 4 0 0 1 0 8h-4" fill="none" stroke="#d0d0d0" stroke-width="2.4"/><path d="M201 56l5-4v8z" fill="#d0d0d0"/><path d="M238 56h-9a4 4 0 0 0 0 8h4" fill="none" stroke="#d0d0d0" stroke-width="2.4"/><path d="M240 56l-5-4v8z" fill="#d0d0d0"/><path d="M251.5 49l3 9.5-3 9.5z" fill="#6e6e6e"/><rect x="274.4" y="49" width="1.2" height="19" fill="#6e6e6e"/><rect x="273.5" y="53.5" width="3" height="10" rx="1" fill="#7a7a7a"/><rect x="289" y="50" width="5" height="5" fill="#d0d0d0"/><rect x="289" y="59" width="5" height="5" fill="#d0d0d0"/><rect x="289" y="55.5" width="1.5" height="3.5" fill="#d0d0d0"/><rect x="295" y="53" width="4" height="4" fill="none" stroke="#5ab6c2" stroke-width="1"/><path transform="translate(300 57) scale(0.85)" d="M0 0v12l3-3 2.5 5 2-1-2.5-5h4z" fill="#d0d0d0" stroke="#333" stroke-width="0.7"/><rect x="315" y="49.5" width="11" height="10" fill="#5ab6c2" stroke="#1d3f4d" stroke-width="1"/><circle cx="315" cy="63" r="4.2" fill="#d0d0d0" stroke="#1d3f4d" stroke-width="0.8"/><path transform="translate(320 55) scale(0.9)" d="M0 0v12l3-3 2.5 5 2-1-2.5-5h4z" fill="#d0d0d0" stroke="#333" stroke-width="0.7"/><rect x="336" y="50" width="4" height="4" fill="#d0d0d0"/><rect x="341" y="50" width="4" height="4" fill="#d0d0d0"/><rect x="336" y="55" width="4" height="4" fill="#d0d0d0"/><rect x="341" y="55" width="4" height="4" fill="#5ab6c2"/><path transform="translate(343 55) scale(0.85)" d="M0 0v12l3-3 2.5 5 2-1-2.5-5h4z" fill="#d0d0d0" stroke="#333" stroke-width="0.7"/><rect x="364.4" y="49" width="1.2" height="19" fill="#6e6e6e"/><rect x="363.5" y="53.5" width="3" height="10" rx="1" fill="#7a7a7a"/><path d="M378.0 56.75h7l-3.5 4.5z" fill="#c8c8c8"/><path d="M391.6 58.5h14M398.6 51.5v14" stroke="#5ab6c2" stroke-width="1.6"/><path d="M424.90000000000003 51l-7 7 6 7" fill="none" stroke="#1d3f4d" stroke-width="1.4"/><circle cx="424.90000000000003" cy="51.5" r="1.6" fill="#5ab6c2" stroke="#1d3f4d" stroke-width=".7"/><circle cx="417.90000000000003" cy="58" r="1.6" fill="#5ab6c2" stroke="#1d3f4d" stroke-width=".7"/><path d="M437.20000000000005 52c4 0 2 6 6 7s4 5 5 6" fill="none" stroke="#1d3f4d" stroke-width="1.4"/><rect x="435.20000000000005" y="50" width="3.5" height="3.5" fill="#5ab6c2" stroke="#1d3f4d" stroke-width=".8"/><rect x="448.20000000000005" y="63" width="3.5" height="3.5" fill="#5ab6c2" stroke="#1d3f4d" stroke-width=".8"/><path d="M465.5 51l7.5 7.5-7.5 7.5-7.5-7.5z" fill="#5ab6c2" stroke="#1d3f4d" stroke-width="1.3"/><path d="M461.75 54.75l7.5 7.5M469.25 54.75l-7.5 7.5" stroke="#1d3f4d" stroke-width="1.3"/><rect x="481.8" y="52.5" width="12" height="12" fill="#5ab6c2" stroke="#1d3f4d" stroke-width="1.3"/><rect x="484.3" y="55" width="7" height="7" fill="#3f7a86" stroke="#1d3f4d" stroke-width="1"/><rect x="480.0" y="50.7" width="3.6" height="3.6" fill="#5ab6c2" stroke="#1d3f4d" stroke-width=".7"/><rect x="480.0" y="62.7" width="3.6" height="3.6" fill="#5ab6c2" stroke="#1d3f4d" stroke-width=".7"/><rect x="492.0" y="50.7" width="3.6" height="3.6" fill="#5ab6c2" stroke="#1d3f4d" stroke-width=".7"/><rect x="492.0" y="62.7" width="3.6" height="3.6" fill="#5ab6c2" stroke="#1d3f4d" stroke-width=".7"/><circle cx="505.1" cy="53.5" r="2.6" fill="#5ab6c2" stroke="#1d3f4d" stroke-width=".8"/><circle cx="510.1" cy="52.5" r="2.6" fill="#5ab6c2" stroke="#1d3f4d" stroke-width=".8"/><circle cx="514.1" cy="55.5" r="2.6" fill="#5ab6c2" stroke="#1d3f4d" stroke-width=".8"/><circle cx="507.1" cy="58.5" r="2.6" fill="#5ab6c2" stroke="#1d3f4d" stroke-width=".8"/><circle cx="512.1" cy="59.5" r="2.6" fill="#5ab6c2" stroke="#1d3f4d" stroke-width=".8"/><circle cx="505.1" cy="63.5" r="2.6" fill="#5ab6c2" stroke="#1d3f4d" stroke-width=".8"/><circle cx="511.1" cy="64.5" r="2.6" fill="#5ab6c2" stroke="#1d3f4d" stroke-width=".8"/><circle cx="515.1" cy="63.5" r="2.6" fill="#5ab6c2" stroke="#1d3f4d" stroke-width=".8"/><rect x="524.4" y="51" width="16" height="4" fill="#5ab6c2" stroke="#1d3f4d" stroke-width=".8"/><rect x="524.4" y="56" width="16" height="10" fill="#5ab6c2" stroke="#1d3f4d" stroke-width=".8"/><circle cx="528.4" cy="63" r="4" fill="#5ab6c2" stroke="#1d3f4d" stroke-width="1"/><text x="554.7" y="66" font-size="17" font-family="Liberation Sans" text-anchor="middle" fill="#79cfdc" stroke="#1d3f4d" stroke-width="0.9">?</text><path d="M575 57v-3a4 4 0 0 1 8 0v3" fill="none" stroke="#d0d0d0" stroke-width="2"/><rect x="573" y="57" width="11.5" height="9" fill="#d0d0d0"/><circle cx="578.8" cy="61" r="1.3" fill="#444"/><rect x="594.5" y="51" width="10" height="10" fill="none" stroke="#d0d0d0" stroke-width="1.2" stroke-dasharray="2 1.5"/><path transform="translate(600 55) scale(0.9)" d="M0 0v12l3-3 2.5 5 2-1-2.5-5h4z" fill="#d0d0d0" stroke="#333" stroke-width="0.7"/><rect x="622.4" y="49" width="1.2" height="19" fill="#6e6e6e"/><rect x="621.5" y="53.5" width="3" height="10" rx="1" fill="#7a7a7a"/><g transform="translate(643.5 57.5) rotate(-45)"><path d="M-4.8 5.5V0A4.8 4.8 0 0 1 4.8 0V5.5" fill="none" stroke="#2a2a2a" stroke-width="4.6"/><path d="M-4.8 5.5V0A4.8 4.8 0 0 1 4.8 0V5.5" fill="none" stroke="#d0d0d0" stroke-width="3"/><rect x="-6.3" y="4" width="3" height="2.5" fill="#555"/><rect x="3.3" y="4" width="3" height="2.5" fill="#555"/></g><path d="M647 62h8M647 65h8M649 60v8M652.5 60v8" stroke="#5ab6c2" stroke-width="1.1"/><g transform="translate(665.5 57.5) rotate(-45)"><path d="M-4.8 5.5V0A4.8 4.8 0 0 1 4.8 0V5.5" fill="none" stroke="#2a2a2a" stroke-width="4.6"/><path d="M-4.8 5.5V0A4.8 4.8 0 0 1 4.8 0V5.5" fill="none" stroke="#d0d0d0" stroke-width="3"/><rect x="-6.3" y="4" width="3" height="2.5" fill="#555"/><rect x="3.3" y="4" width="3" height="2.5" fill="#555"/></g><path d="M660 66c4 1 9 0 12-4" fill="none" stroke="#5ab6c2" stroke-width="1.1"/><g transform="translate(688 57.5) rotate(-45)"><path d="M-4.8 5.5V0A4.8 4.8 0 0 1 4.8 0V5.5" fill="none" stroke="#2a2a2a" stroke-width="4.6"/><path d="M-4.8 5.5V0A4.8 4.8 0 0 1 4.8 0V5.5" fill="none" stroke="#d0d0d0" stroke-width="3"/><rect x="-6.3" y="4" width="3" height="2.5" fill="#555"/><rect x="3.3" y="4" width="3" height="2.5" fill="#555"/></g><circle cx="695" cy="64.5" r="1.8" fill="#5ab6c2"/><g transform="translate(710.5 57.5) rotate(-45)"><path d="M-4.8 5.5V0A4.8 4.8 0 0 1 4.8 0V5.5" fill="none" stroke="#2a2a2a" stroke-width="4.6"/><path d="M-4.8 5.5V0A4.8 4.8 0 0 1 4.8 0V5.5" fill="none" stroke="#d0d0d0" stroke-width="3"/><rect x="-6.3" y="4" width="3" height="2.5" fill="#555"/><rect x="3.3" y="4" width="3" height="2.5" fill="#555"/></g><circle cx="719" cy="50.5" r="1.5" fill="none" stroke="#5ab6c2"/><circle cx="716" cy="61" r="1.5" fill="none" stroke="#5ab6c2"/><path d="M716 63v4M713 61h-2M719 61h2" stroke="#5ab6c2" stroke-width=".8"/><g transform="translate(732.5 57.5) rotate(-45)"><path d="M-4.8 5.5V0A4.8 4.8 0 0 1 4.8 0V5.5" fill="none" stroke="#2a2a2a" stroke-width="4.6"/><path d="M-4.8 5.5V0A4.8 4.8 0 0 1 4.8 0V5.5" fill="none" stroke="#d0d0d0" stroke-width="3"/><rect x="-6.3" y="4" width="3" height="2.5" fill="#555"/><rect x="3.3" y="4" width="3" height="2.5" fill="#555"/></g><path d="M735 62l4-4 5 5-4 4z" fill="none" stroke="#5ab6c2" stroke-width="1"/><g transform="translate(756 57.5) rotate(-45)"><path d="M-4.8 5.5V0A4.8 4.8 0 0 1 4.8 0V5.5" fill="none" stroke="#2a2a2a" stroke-width="4.6"/><path d="M-4.8 5.5V0A4.8 4.8 0 0 1 4.8 0V5.5" fill="none" stroke="#d0d0d0" stroke-width="3"/><rect x="-6.3" y="4" width="3" height="2.5" fill="#555"/><rect x="3.3" y="4" width="3" height="2.5" fill="#555"/></g><path d="M773.5 57.25h7l-3.5 4.5z" fill="#c8c8c8"/><rect x="895.4" y="49" width="1.2" height="19" fill="#6e6e6e"/><rect x="894.5" y="53.5" width="3" height="10" rx="1" fill="#7a7a7a"/><path d="M912.5 57.25h7l-3.5 4.5z" fill="#c8c8c8"/><rect x="1034.1000000000001" y="49" width="1.2" height="19" fill="#6e6e6e"/><rect x="1033.2" y="53.5" width="3" height="10" rx="1" fill="#7a7a7a"/><rect x="1051" y="51.5" width="12.5" height="14" fill="none" stroke="#d0d0d0" stroke-width="1.6"/><path d="M1048 53l6 5.5-6 5.5z" fill="#d0d0d0"/><rect x="1071.5" y="51.5" width="12.5" height="14" fill="none" stroke="#d0d0d0" stroke-width="1.6"/><path d="M1082 53l6 5.5-6 5.5z" fill="#d0d0d0"/><circle cx="1098" cy="54" r="4.3" fill="#d0d0d0" stroke="#1d3f4d" stroke-width=".8"/><path d="M1098 51.5v3h2" stroke="#1d3f4d" stroke-width=".9" fill="none"/><path d="M1102 58h7M1102 62h7M1102 66h7M1096 62h3M1096 66h3" stroke="#5ab6c2" stroke-width="1.6"/><rect x="1122.9" y="49" width="1.2" height="19" fill="#6e6e6e"/><rect x="1122.0" y="53.5" width="3" height="10" rx="1" fill="#7a7a7a"/><rect x="1137" y="50.5" width="16.5" height="3.5" fill="#d0d0d0"/><path d="M1139 50.5l2 3.5M1143 50.5l2 3.5M1147 50.5l2 3.5" stroke="#444" stroke-width="1"/><rect x="1137" y="55" width="16.5" height="11.5" fill="#d0d0d0"/><ellipse cx="1145.2" cy="60.8" rx="5.5" ry="3" fill="none" stroke="#444" stroke-width="1.2"/><circle cx="1145.2" cy="60.8" r="1.6" fill="#444"/><rect x="1160" y="50.5" width="16.5" height="3.5" fill="#d0d0d0"/><path d="M1162 50.5l2 3.5M1166 50.5l2 3.5M1170 50.5l2 3.5" stroke="#444" stroke-width="1"/><rect x="1160" y="55" width="16.5" height="11.5" fill="#d0d0d0"/><rect x="1182" y="50.5" width="16.5" height="3.5" fill="#d0d0d0"/><path d="M1184 50.5l2 3.5M1188 50.5l2 3.5M1192 50.5l2 3.5" stroke="#444" stroke-width="1"/><rect x="1182" y="55" width="16.5" height="11.5" fill="#d0d0d0"/><text x="1190.2" y="64.5" font-size="8" font-weight="bold" font-family="Liberation Sans" text-anchor="middle" fill="#444">IPR</text><rect x="1204.5" y="50.5" width="16.5" height="3.5" fill="#d0d0d0"/><path d="M1206.5 50.5l2 3.5M1210.5 50.5l2 3.5M1214.5 50.5l2 3.5" stroke="#444" stroke-width="1"/><rect x="1204.5" y="55" width="16.5" height="11.5" fill="#d0d0d0"/><circle cx="1218" cy="63" r="3.8" fill="#5ab6c2" stroke="#444" stroke-width="1"/><circle cx="1235" cy="58.5" r="8" fill="#5ab6c2"/><circle cx="1236" cy="57" r="3.5" fill="#dff"/><circle cx="1236" cy="57" r="2.8" fill="#444"/><rect x="1249" y="50.5" width="16.5" height="3.5" fill="#d0d0d0"/><path d="M1251 50.5l2 3.5M1255 50.5l2 3.5M1259 50.5l2 3.5" stroke="#444" stroke-width="1"/><rect x="1249" y="55" width="16.5" height="11.5" fill="#d0d0d0"/><path d="M1254 61l7-3.5 7 3.5-7 3.5z" fill="#5ab6c2" stroke="#444"/><path d="M1254 64.5l7 3.5 7-3.5" fill="none" stroke="#5ab6c2" stroke-width="1.2"/><path d="M1274 64l11-11 2 2-9 10z" fill="#d0d0d0"/><circle cx="1283" cy="63" r="4" fill="#5ab6c2"/><circle cx="1283" cy="63" r="1.5" fill="#444"/><path d="M1271 60h4M1273 56h3" stroke="#5ab6c2" stroke-width="1" stroke-dasharray="1.5 1"/><rect x="1297" y="52" width="3.5" height="13" fill="#d0d0d0"/><rect x="1304" y="52" width="3.5" height="13" fill="#d0d0d0"/><rect x="1323.9" y="49" width="1.2" height="19" fill="#6e6e6e"/><rect x="1323.0" y="53.5" width="3" height="10" rx="1" fill="#7a7a7a"/><rect x="1345" y="50.5" width="14.5" height="16" fill="none" stroke="#d0d0d0" stroke-width="1.2"/><path d="M1349.5 53.5h6M1349.5 63.5h6M1352.5 53.5v10" stroke="#d0d0d0" stroke-width="1.2"/><path d="M1483 57l6.5-4 5.5 3v12l-6 1.5-6-4z" fill="#d0d0d0"/><path d="M1489.5 53l-0.5 16M1483 61l6 3.5 6-3M1486 55v12M1483.5 57l6 3.5 5.5-3" stroke="#444" stroke-width=".9" fill="none"/><path d="M1493 51.5h6.5l1 1.3h-3v15.5h-2.2v-15.5h-2.3z" fill="#d0d0d0"/><circle cx="1514" cy="52.8" r="1.9" fill="#d0d0d0"/><rect x="1510.5" y="55.5" width="7" height="7.5" fill="#d0d0d0"/><rect x="1506" y="56.2" width="3.6" height="1.8" fill="#d0d0d0"/><rect x="1518.5" y="56.2" width="3.6" height="1.8" fill="#d0d0d0"/><rect x="1510.8" y="63.5" width="2.6" height="5" fill="#d0d0d0"/><rect x="1514.6" y="63.5" width="2.6" height="5" fill="#d0d0d0"/><path d="M1512.5 59l1.5-1.5 1.5 1.5-1.5 1.5z" fill="#444"/><path d="M1529 52.9h4M1529 59.5h4M1529 66.2h4" stroke="#d0d0d0" stroke-width="1.3"/><rect x="1535" y="51" width="9.5" height="3.8" fill="none" stroke="#d0d0d0" stroke-width="1.3"/><rect x="1535" y="64.3" width="9.5" height="3.8" fill="none" stroke="#d0d0d0" stroke-width="1.3"/><circle cx="1539.8" cy="59.5" r="2" fill="#d0d0d0"/><path d="M1536 57.3l-1 2.2 1 2.2M1543.5 57.3l1 2.2-1 2.2" stroke="#d0d0d0" stroke-width="1.1" fill="none"/><circle cx="1553.5" cy="52.6" r="1.9" fill="#d0d0d0"/><circle cx="1553.5" cy="59.3" r="1.9" fill="#d0d0d0"/><circle cx="1553.5" cy="66.2" r="1.9" fill="#d0d0d0"/><path d="M1556 52.6h2M1556 59.3h4M1556 66.2h4" stroke="#d0d0d0" stroke-width="1.2"/><path d="M1559.5 51.5h6.5l1.5 1.5h-3.5v15h-2v-15h-2.5z" fill="#d0d0d0"/><path d="M1581.5 50l9 8-9 6-9-6z" fill="#cfd8de" stroke="#2f3e48" stroke-width="0.9"/><path d="M1578 57h7M1578 59h7M1581.5 54.5v7" stroke="#8aa" stroke-width=".8"/><path d="M1572.5 61l9 5.5 9-5.5M1572.5 63.8l9 5.5 9-5.5" fill="none" stroke="#2f3e48" stroke-width="2"/><path d="M1572.5 61l9 5.5 9-5.5M1572.5 63.8l9 5.5 9-5.5" fill="none" stroke="#d8e2e8" stroke-width="0.9"/><path d="M1578 31v-2.5a4 4 0 0 1 8 0v2.5" fill="none" stroke="#d0d0d0" stroke-width="2"/><rect x="1576.4" y="31" width="11" height="8.5" fill="#d0d0d0"/><circle cx="1582" cy="34.5" r="1.2" fill="#333"/><circle cx="57.7" cy="114" r="11.3" fill="none" stroke="#6aa4c8" stroke-width="1.8"/><rect x="81" y="103" width="21" height="21.5" fill="none" stroke="#6aa4c8" stroke-width="1.6"/><path d="M116 104.5h6l3.5 3.5M125 111l-1.5 5M125.5 123l3 2.5h5" fill="none" stroke="#6aa4c8" stroke-width="1.3"/><rect x="113.8" y="102.3" width="4.4" height="4.4" fill="none" stroke="#6aa4c8" stroke-width="1.2"/><rect x="125.8" y="106.3" width="4.4" height="4.4" fill="none" stroke="#6aa4c8" stroke-width="1.2"/><rect x="122.8" y="116.3" width="4.4" height="4.4" fill="none" stroke="#6aa4c8" stroke-width="1.2"/><rect x="132.8" y="121.3" width="4.4" height="4.4" fill="none" stroke="#6aa4c8" stroke-width="1.2"/><path d="M155 125c-9-2-10-7-5-11s10-7 10-10-3-4-4-4" fill="none" stroke="#6aa4c8" stroke-width="1.6"/><path d="M155 126.5l2.5-6.5 12-11.5 3.5 3.5-12 11.5z" fill="#d0d0d0"/><path d="M155 126.5l2.5-6.5 4 4z" fill="#999"/><path d="M185 125c-3-6-2-17 10-20" fill="none" stroke="#6aa4c8" stroke-width="1.6" stroke-dasharray="3 2"/><path d="M196 105c4 0 7 1 8 3" fill="none" stroke="#6aa4c8" stroke-width="1.6"/><rect x="183.8" y="104.8" width="4.4" height="4.4" fill="#222" stroke="#d0d0d0" stroke-width="1.3"/><rect x="201.3" y="105.8" width="4.4" height="4.4" fill="#222" stroke="#d0d0d0" stroke-width="1.3"/><rect x="184.8" y="120.8" width="4.4" height="4.4" fill="#222" stroke="#d0d0d0" stroke-width="1.3"/><circle cx="195" cy="114.5" r="1.8" fill="#d0d0d0"/><path d="M216 111c3-8 7-8 10 0s7 9 12 2" fill="none" stroke="#6aa4c8" stroke-width="1.6"/><path d="M226 111l1.5 6" stroke="#d0d0d0" stroke-width="2"/><path d="M250 111c3-8 7-8 10 0s7 9 12 2" fill="none" stroke="#6aa4c8" stroke-width="1.6"/><path d="M251 126l4-6 16-14 3 3-14 14z" fill="#d0d0d0"/><path d="M284.5 111c3-8 7-8 10 0s7 9 12 2" fill="none" stroke="#6aa4c8" stroke-width="1.6"/><rect x="294" y="112" width="4.5" height="4.5" fill="#222" stroke="#d0d0d0" stroke-width="1.3"/><path d="M319 111c3-8 7-8 10 0s3 14 10 8" fill="none" stroke="#6aa4c8" stroke-width="1.6"/><path d="M334 122l8-8" stroke="#d0d0d0" stroke-width="2.2"/><path d="M344 111l-1 7-6-6z" fill="#d0d0d0"/><path d="M357 126a11 11 0 0 1 19-15" fill="none" stroke="#6aa4c8" stroke-width="1.6"/><path d="M362 125a7 7 0 0 1 11-11" fill="none" stroke="#d0d0d0" stroke-width="1.6"/><path d="M391 104c4 1 4 4 1 7s-4 8-1 11M406 104c3 2 4 5 1 8s-4 8-1 11" fill="none" stroke="#6aa4c8" stroke-width="1.5" stroke-dasharray="2 1.5"/><rect x="389" y="101.5" width="4" height="4" fill="#222" stroke="#6aa4c8" stroke-width="1.1"/><rect x="389" y="112" width="4" height="4" fill="#222" stroke="#6aa4c8" stroke-width="1.1"/><rect x="389" y="122" width="4" height="4" fill="#222" stroke="#6aa4c8" stroke-width="1.1"/><rect x="404" y="102" width="4" height="4" fill="#222" stroke="#d0d0d0" stroke-width="1.1"/><rect x="404" y="122" width="4" height="4" fill="#222" stroke="#d0d0d0" stroke-width="1.1"/><path d="M423 108c4 0 5 3 6 8s3 9 6 8 5-3 6-4" fill="none" stroke="#6aa4c8" stroke-width="1.6"/><rect x="420.3" y="105.8" width="4.4" height="4.4" fill="#222" stroke="#6aa4c8" stroke-width="1.1"/><rect x="427.8" y="110.8" width="4.4" height="4.4" fill="#222" stroke="#6aa4c8" stroke-width="1.1"/><rect x="440.8" y="117.8" width="4.4" height="4.4" fill="#222" stroke="#d0d0d0" stroke-width="1.1"/><path d="M458 106c-2 7-3 14 1 16s12 1 19 1" fill="none" stroke="#6aa4c8" stroke-width="1.6"/><path d="M456 124l22-19" stroke="#d0d0d0" stroke-width="1.3"/><path d="M489 109c4 2 9-2 13 4s-1 8-1 13" fill="none" stroke="#6aa4c8" stroke-width="1.5"/><circle cx="497" cy="103.5" r="1.8" fill="#d0d0d0"/><rect x="502" y="110.5" width="4" height="4" fill="#222" stroke="#6aa4c8"/><rect x="511.5" y="118" width="3" height="3" fill="#222" stroke="#d0d0d0" stroke-width=".8"/><path d="M498 105l5 6M506 114l6 5" stroke="#d0d0d0" stroke-width=".7" stroke-dasharray="1 1"/><rect x="524" y="97.5" width="1.6" height="33.5" fill="#9a9a9a"/><ellipse cx="547" cy="114" rx="12" ry="11.5" fill="#6aa4c8"/><path d="M535 114a12 4 0 0 0 24 0" fill="none" stroke="#3a5f78" stroke-width="1"/><path d="M581 102l11 5v13l-11 6-11-6v-13z" fill="#6aa4c8"/><path d="M570 107l11 5 11-5M581 112v14" fill="none" stroke="#444" stroke-width="1.1"/><path d="M605 106a11 4.5 0 0 1 21.5 0v15a11 4.5 0 0 1-21.5 0z" fill="#6aa4c8"/><path d="M605 106a11 4.5 0 0 0 21.5 0" fill="none" stroke="#444" stroke-width="1.1"/><path d="M649.5 103l9.5 19a9.5 3.5 0 0 1-19 0z" fill="#6aa4c8"/><path d="M684 102l12 12-12 12-12-12z" fill="#6aa4c8"/><ellipse cx="718" cy="114" rx="10" ry="12" fill="#6aa4c8" transform="rotate(-20 718 114)"/><ellipse cx="718" cy="114" rx="3.5" ry="6" fill="#444" transform="rotate(-20 718 114)"/><path d="M741 106a10 5 0 0 1 20 0c0 6-6 8-8 9v6h-4v-6c-2-1-8-3-8-9z" fill="#6aa4c8"/><ellipse cx="751" cy="106" rx="7" ry="3" fill="#444"/><path d="M740 124c5 4 17 4 22-2" fill="none" stroke="#d0d0d0" stroke-width="2"/><path d="M742 120l-3 5 6 0z" fill="#d0d0d0"/><path d="M777 104c6-1 9 0 8 4s-6 8-4 12-3 6-5 6c0-4 4-7 2-11s2-8-1-11z" fill="#6aa4c8"/><path d="M787 104c6-1 9 0 8 4s-6 8-4 12-3 6-5 6c0-4 4-7 2-11s2-8-1-11z" fill="#6aa4c8"/><path d="M820 102l12 12-12 12-12-12z" fill="#6aa4c8"/><circle cx="820" cy="114" r="5.5" fill="#444"/><circle cx="820" cy="114" r="6.5" fill="none" stroke="#6aa4c8" stroke-width="1"/><path d="M846 107l14 7-4 8-14-7z" fill="#6aa4c8"/><circle cx="846" cy="109.5" r="4.5" fill="#d0d0d0"/><circle cx="858.5" cy="118" r="5" fill="#333" stroke="#6aa4c8" stroke-width="1.5"/><path d="M876 108c6-4 14-3 17 4l7 4c-5-2-10-1-14 4-3-4-8-8-10-12z" fill="#6aa4c8"/><path d="M882 110c3 3 4 6 4 10" stroke="#444" fill="none"/><path d="M923 102l11.5 6v13l-11.5 6-11.5-6v-13z" fill="#6aa4c8"/><path d="M911.5 108l11.5 6 11.5-6M923 114v13" fill="none" stroke="#d0d0d0" stroke-width="2"/><path d="M945 108h10v-3h10v22h-20z" fill="#6aa4c8"/><path d="M945 110c6 0 12 6 12 14" fill="none" stroke="#d0d0d0" stroke-width="1"/><circle cx="960" cy="110" r="9.3" fill="none" stroke="#d0d0d0" stroke-width="1.3"/><circle cx="960" cy="110" r="7" fill="none" stroke="#d0d0d0" stroke-width="1"/><path d="M978.5 108h26v19h-26z" fill="#6aa4c8"/><circle cx="993" cy="108.5" r="9" fill="#6aa4c8" stroke="#444" stroke-width="1.2"/><path d="M1013.5 108h16v19h-16z" fill="#6aa4c8"/><path d="M1013.5 108c8 2 10 8 12 14" fill="none" stroke="#444" stroke-width="1.5"/><circle cx="1029" cy="109" r="8.5" fill="none" stroke="#d0d0d0" stroke-width="1.3" stroke-dasharray="2.2 1.8"/><path d="M1047.5 108h18v19h-18z" fill="#6aa4c8"/><path d="M1055 108a8.5 8.5 0 0 0 10.5 10.5v-10.5z" fill="#d0d0d0"/><circle cx="1064" cy="109" r="8.5" fill="none" stroke="#d0d0d0" stroke-width="1.3" stroke-dasharray="2.2 1.8"/><path d="M1093 102l12 12-12 12-12-12z" fill="#6aa4c8"/><path d="M1087 120l12-12M1084.5 117.5l12-12" stroke="#d0d0d0" stroke-width="1.3"/><path d="M1128 102l12 12-12 12-12-12z" fill="#6aa4c8"/><path d="M1120 118l12-12" stroke="#444" stroke-width="2.5"/><path d="M1147 122l8-6 7 7-8 6z" fill="#6aa4c8"/><circle cx="1158" cy="125" r="4.8" fill="#333" stroke="#6aa4c8" stroke-width="1.5"/><path d="M1166 102a7 7 0 1 0 6 11a5.5 5.5 0 0 1-6-11z" fill="#d0d0d0"/><path d="M1163 112l10 2-2 4z" fill="#d0d0d0"/><path d="M1196 104l12 10-12 12-12-12z" fill="#6aa4c8"/><path d="M1184 114l6 6 6-6" fill="none" stroke="#444" stroke-width="1.5"/><path d="M1184 103l7 7M1186 110h5v-5" fill="none" stroke="#d0d0d0" stroke-width="2"/><path d="M1232 104l10 10-10 10-10-10z" fill="#6aa4c8"/><path d="M1222 114l-5 5 6 7 5-5z" fill="#d0d0d0"/><path d="M1218 110l7-7M1220 103h5v5" fill="none" stroke="#d0d0d0" stroke-width="2"/><rect x="1253" y="110" width="3" height="16" fill="#d0d0d0"/><rect x="1257" y="114" width="3" height="12" fill="#d0d0d0"/><rect x="1261" y="118" width="3" height="8" fill="#d0d0d0"/><rect x="1261" y="103" width="7" height="13" fill="#6aa4c8"/><rect x="1269" y="103" width="7.5" height="13" fill="#6aa4c8"/><path d="M1286 112a12 12 0 0 0 22 8c-6 4-14 3-16-3z" fill="#6aa4c8"/><path d="M1292 121l14-14 2 2-12 13z" fill="#d0d0d0"/><path d="M1288 123l4-3 2 2z" fill="#d0d0d0"/><path d="M1332 103l12 11-12 11-12-11z" fill="#6aa4c8"/><path d="M1320 126l24-23" stroke="#d0d0d0" stroke-width="1.3"/><path d="M1329 108l-4 5" stroke="#444" stroke-width="2"/><path transform="translate(13.5 157) scale(2.05)" d="M0 0v12l3-3 2.5 5 2-1-2.5-5h4z" fill="#d0d0d0" stroke="#3a5a70" stroke-width="0.7"/><ellipse cx="18" cy="204" rx="9.5" ry="6.5" fill="none" stroke="#5ab6c2" stroke-width="2.2" stroke-dasharray="3 2" transform="rotate(-35 18 204)"/><path transform="translate(20 199) scale(1.25)" d="M0 0v12l3-3 2.5 5 2-1-2.5-5h4z" fill="#d0d0d0" stroke="#333" stroke-width="0.7"/><ellipse cx="17.5" cy="245" rx="9.5" ry="6.5" fill="none" stroke="#5ab6c2" stroke-width="2.2" stroke-dasharray="3 2" transform="rotate(-35 17.5 245)"/><path d="M16 250c2-4 5-6 8-6l9-10 2 2-9 10c-2 3-6 5-10 4z" fill="#d0d0d0"/><rect x="15" y="271.5" width="11.5" height="11.5" fill="#d0d0d0"/><path d="M20.75 264l3 3.5h-6zM20.75 290.5l3-3.5h-6zM8 277.25l3.5-3v6zM33.5 277.25l-3.5-3v6z" fill="#5ab6c2"/><path d="M12 321a10 10 0 1 1 16 -2" fill="none" stroke="#5ab6c2" stroke-width="1.8"/><path d="M25 318l6 1-2 5z" fill="#5ab6c2"/><path d="M20 306l7.5 7.5-7.5 7.5-7.5-7.5z" fill="#d0d0d0"/><rect x="10" y="340" width="21" height="20" fill="none" stroke="#5ab6c2" stroke-width="1.5" stroke-dasharray="2.2 1.6"/><rect x="9" y="350" width="11" height="11" fill="#d0d0d0"/><path d="M17 350v-5h6v6" fill="none" stroke="#5ab6c2" stroke-width="1.5"/><path d="M12 413h6l4 5-1 5 4 4" fill="none" stroke="#5ab6c2" stroke-width="1.1" stroke-dasharray="2 1"/><rect x="9" y="411" width="4" height="4" fill="none" stroke="#5ab6c2" stroke-width="1.1"/><rect x="20" y="413" width="4" height="4" fill="none" stroke="#5ab6c2" stroke-width="1.1"/><rect x="17" y="422" width="4" height="4" fill="none" stroke="#5ab6c2" stroke-width="1.1"/><rect x="28" y="429" width="4" height="4" fill="none" stroke="#5ab6c2" stroke-width="1.1"/><rect x="7.5" y="455.5" width="27.5" height="27" fill="#5a5a5a" stroke="#d0d0d0" stroke-width="1.6"/><rect x="9" y="457" width="24.5" height="24" fill="#d0d0d0"/><path d="M21.25 462l3.5 3.5-3.5 3.5-3.5-3.5zM16 467l3.5 3.5-3.5 3.5-3.5-3.5zM26.5 467l3.5 3.5-3.5 3.5-3.5-3.5zM21.25 472l3.5 3.5-3.5 3.5-3.5-3.5z" fill="#444"/><rect x="8" y="492" width="12" height="12" fill="#444" stroke="#d0d0d0" stroke-width="1.2"/><path d="M10.5 498h7M14 494.5v7" stroke="#d0d0d0" stroke-width="1.3"/><rect x="22" y="492" width="12" height="12" fill="#d0d0d0"/><path d="M28 495l3.5 3-3.5 3-3.5-3z" fill="#444"/><rect x="8" y="506" width="12" height="12" fill="#444" stroke="#d0d0d0" stroke-width="1.2"/><path d="M10.5 512h7M14 508.5v7" stroke="#d0d0d0" stroke-width="1.3"/><rect x="22" y="506" width="12" height="12" fill="#444" stroke="#d0d0d0" stroke-width="1.2"/><path d="M24.5 512h7M28 508.5v7" stroke="#d0d0d0" stroke-width="1.3"/><rect x="8" y="528" width="12" height="27" fill="#444" stroke="#d0d0d0" stroke-width="1.2"/><path d="M10.5 541.5h7M14 538v7" stroke="#d0d0d0" stroke-width="1.3"/><rect x="22" y="528" width="13" height="27" fill="#d0d0d0"/><path d="M28.5 538.5l3.5 3-3.5 3-3.5-3z" fill="#444"/><rect x="8" y="564" width="27" height="27" fill="none" stroke="#d0d0d0" stroke-width="1.5"/><rect x="11" y="567" width="21" height="21" fill="none" stroke="#2c4a5c" stroke-width="1"/><path d="M14 570h4v4h-4zM17 576h4v4h-4zM17 582h4v4h-4z" fill="#cfe3ee" stroke="#2c4a5c" stroke-width=".6"/><path d="M16 574v10h1M21 578h8M21 584h8M18 572h10" stroke="#cfe3ee" stroke-width="1"/><path d="M5 835h10l9 22 5-22h9v30.5h-8.5v-14l-5 12h-7l-4-9v11h-8.5z" fill="#1f4b52"/><path d="M5.8 836h7.4v29h-7.4z" fill="#3fa9b5"/><path d="M6 846l7 18h-7z" fill="#7fcdd3"/><path d="M5.8 836h8.6l10 24h-6.2z" fill="#9ad6da"/><path d="M21.5 853l7.5-17h8.2l-9.5 22z" fill="#49b4c2"/><path d="M29.5 836h7.7v29h-7.7z" fill="#56c0c8"/><path d="M37 842l-7.5 23h7.5z" fill="#7fd2d6"/><rect x="311.9" y="163" width="1.2" height="17" fill="#6e6e6e"/><rect x="311.0" y="166.5" width="3" height="10" rx="1" fill="#7a7a7a"/><rect x="321" y="167" width="9" height="8" fill="#d0d0d0"/><path d="M330 171l5-4v8z" fill="#d0d0d0"/><rect x="339" y="165" width="9" height="7" fill="#d0d0d0"/><path d="M348 168.5l5-4v8z" fill="#d0d0d0"/><path d="M340 175v-2.5a2.5 2.5 0 0 1 5 0v2.5" fill="none" stroke="#5ab6c2" stroke-width="1.5"/><rect x="339" y="175" width="7.5" height="6" fill="#5ab6c2"/><rect x="358" y="165" width="9" height="7" fill="#d0d0d0"/><path d="M367 168.5l5-4v8z" fill="#d0d0d0"/><circle cx="362" cy="176" r="3.8" fill="none" stroke="#5ab6c2" stroke-width="2.2" stroke-dasharray="1.6 1.2"/><circle cx="362" cy="176" r="1.2" fill="#5ab6c2"/><path d="M380 164.5h6.5v14l-3.25-3-3.25 3z" fill="#d0d0d0"/><path d="M397 178l4-12 4 3-4 9z" fill="#5ab6c2"/><path d="M395 179l9-4 4 3z" fill="#d0d0d0"/><circle cx="421" cy="172" r="4" fill="none" stroke="#5ab6c2" stroke-width="1.6"/><path d="M424 175l3 3" stroke="#5ab6c2" stroke-width="2"/><path d="M414 169h5M416.5 166.5v5" stroke="#d0d0d0" stroke-width="1.3"/><path d="M433 178l9-10 2 2-9 10z" fill="#d0d0d0"/><path d="M434 179c3 0 7 0 9-2" fill="none" stroke="#d0d0d0" stroke-width="1"/><rect x="452.4" y="163" width="1.2" height="17" fill="#6e6e6e"/><rect x="451.5" y="166.5" width="3" height="10" rx="1" fill="#7a7a7a"/><rect x="462" y="165.5" width="12" height="12" fill="none" stroke="#d0d0d0" stroke-width="1.3"/><path d="M465 165.5v12M468 165.5v12M471 165.5v12M462 168.5h12M462 171.5h12M462 174.5h12" stroke="#d0d0d0" stroke-width="1"/><rect x="481" y="165.5" width="11.5" height="11" fill="none" stroke="#d0d0d0" stroke-width="1.3"/><rect x="481" y="168" width="11.5" height="6" fill="#333"/><rect x="499.5" y="165.5" width="12.5" height="11.5" fill="none" stroke="#d0d0d0" stroke-width="1.3"/><circle cx="505.75" cy="171.25" r="3.2" fill="#5ab6c2"/><circle cx="524" cy="171.25" r="3.2" fill="#4a4a4a"/><rect x="536" y="165.5" width="13" height="11.5" fill="none" stroke="#d0d0d0" stroke-width="1.3"/><rect x="538.5" y="168" width="8" height="6.5" fill="none" stroke="#5ab6c2" stroke-width="1.2"/><rect x="554.5" y="165.5" width="12.5" height="11.5" fill="none" stroke="#d0d0d0" stroke-width="1.3"/><path d="M556.5 175l4-5 3 3z" fill="#5ab6c2"/><circle cx="563" cy="168.5" r="2" fill="#5ab6c2"/><rect x="573" y="165.5" width="13" height="11.5" fill="none" stroke="#d0d0d0" stroke-width="1.3"/><path d="M576 168h7M579.5 168v7" stroke="#5ab6c2" stroke-width="1.5"/><rect x="593.4" y="163" width="1.2" height="17" fill="#6e6e6e"/><rect x="592.5" y="166.5" width="3" height="10" rx="1" fill="#7a7a7a"/><path d="M608.5 164l6.5 3.2v8l-6.5 3.3-6.5-3.3v-8z" fill="none" stroke="#d0d0d0" stroke-width="1"/><path d="M602.0 167.2l6.5 3.3 6.5-3.3M608.5 170.5v8" fill="none" stroke="#d0d0d0" stroke-width="1"/><path d="M627.5 164l6.5 3.2v8l-6.5 3.3-6.5-3.3v-8z" fill="#5ab6c2" stroke="#2a5060" stroke-width="1"/><path d="M621.0 167.2l6.5 3.3 6.5-3.3M627.5 170.5v8" fill="none" stroke="#2a5060" stroke-width="1"/><circle cx="646" cy="171" r="6.5" fill="#d0d0d0"/><path d="M646 164.5a6.5 6.5 0 0 1 0 13z" fill="#444"/><path d="M647 166h2v2h-2zM649 168h2v2h-2zM647 170h2v2h-2zM649 172h2v2h-2zM647 174h2v2h-2z" fill="#d0d0d0"/><path d="M664.5 164l6.5 3.2v8l-6.5 3.3-6.5-3.3v-8z" fill="#5ab6c2" stroke="#d0d0d0" stroke-width="1"/><path d="M658.0 167.2l6.5 3.3 6.5-3.3M664.5 170.5v8" fill="none" stroke="#d0d0d0" stroke-width="1"/><circle cx="683" cy="171" r="6.5" fill="#d0d0d0"/><rect x="677" y="165" width="1" height="1" fill="#444"/><rect x="677" y="169" width="1" height="1" fill="#444"/><rect x="677" y="173" width="1" height="1" fill="#444"/><rect x="677" y="177" width="1" height="1" fill="#444"/><rect x="679" y="167" width="1" height="1" fill="#444"/><rect x="679" y="171" width="1" height="1" fill="#444"/><rect x="679" y="175" width="1" height="1" fill="#444"/><rect x="681" y="165" width="1" height="1" fill="#444"/><rect x="681" y="169" width="1" height="1" fill="#444"/><rect x="681" y="173" width="1" height="1" fill="#444"/><rect x="681" y="177" width="1" height="1" fill="#444"/><rect x="683" y="167" width="1" height="1" fill="#444"/><rect x="683" y="171" width="1" height="1" fill="#444"/><rect x="683" y="175" width="1" height="1" fill="#444"/><rect x="685" y="165" width="1" height="1" fill="#444"/><rect x="685" y="169" width="1" height="1" fill="#444"/><rect x="685" y="173" width="1" height="1" fill="#444"/><rect x="685" y="177" width="1" height="1" fill="#444"/><rect x="687" y="167" width="1" height="1" fill="#444"/><rect x="687" y="171" width="1" height="1" fill="#444"/><rect x="687" y="175" width="1" height="1" fill="#444"/><rect x="689" y="165" width="1" height="1" fill="#444"/><rect x="689" y="169" width="1" height="1" fill="#444"/><rect x="689" y="173" width="1" height="1" fill="#444"/><rect x="689" y="177" width="1" height="1" fill="#444"/><circle cx="701" cy="169" r="3.5" fill="#d0d0d0"/><rect x="699.5" y="172.5" width="3" height="4" fill="#d0d0d0"/><path d="M695 169h-2M707 169h2M701 163v-1.5M696.5 164.5l-1-1M705.5 164.5l1-1" stroke="#d0d0d0" stroke-width="1"/><circle cx="721.5" cy="170.5" r="5.5" fill="#5ab6c2"/><path d="M713 176.5c3-3 6-3 8 0" fill="none" stroke="#d0d0d0" stroke-width="1.2" stroke-dasharray="1 1"/><rect x="733.4" y="163" width="1.2" height="17" fill="#6e6e6e"/><rect x="732.5" y="166.5" width="3" height="10" rx="1" fill="#7a7a7a"/><circle cx="749.5" cy="169.5" r="5.5" fill="#d0d0d0"/><path d="M743 176c4 3 9 3 13 0" fill="none" stroke="#5ab6c2" stroke-width="1.8"/><circle cx="770" cy="168" r="4.8" fill="#d0d0d0"/><circle cx="765" cy="174" r="3.8" fill="#6a6a6a"/><circle cx="786" cy="171" r="5.5" fill="none" stroke="#5ab6c2" stroke-width="2.2" stroke-dasharray="6 2"/><rect x="800" y="167" width="9" height="9" fill="#4a5a60"/><rect x="817.9" y="163" width="1.2" height="17" fill="#6e6e6e"/><rect x="817.0" y="166.5" width="3" height="10" rx="1" fill="#7a7a7a"/><rect x="828" y="165" width="9" height="8" fill="none" stroke="#5ab6c2" stroke-width="1.2" stroke-dasharray="2 1.3"/><path transform="translate(834 169) scale(0.8)" d="M0 0v12l3-3 2.5 5 2-1-2.5-5h4z" fill="#d0d0d0" stroke="#333" stroke-width="0.7"/><rect x="847.9" y="163" width="1.2" height="17" fill="#6e6e6e"/><rect x="847.0" y="166.5" width="3" height="10" rx="1" fill="#7a7a7a"/><rect x="860" y="165" width="9" height="9" fill="none" stroke="#d0d0d0" stroke-width="1.6"/><rect x="857" y="168" width="9" height="9" fill="#d0d0d0"/><rect x="859.5" y="170.5" width="4" height="4" fill="#444"/><rect x="880" y="165" width="9" height="9" fill="none" stroke="#d0d0d0" stroke-width="1.6"/><rect x="877" y="168" width="9" height="9" fill="#d0d0d0"/><rect x="881.5" y="167.5" width="5" height="4" fill="#444"/><rect x="895" y="165.5" width="11.5" height="11.5" fill="none" stroke="#d0d0d0" stroke-width="1.3"/><path d="M897.5 168l7 7" stroke="#d0d0d0" stroke-width="1.5"/><circle cx="899.5" cy="170" r="1.5" fill="#d0d0d0"/><rect x="913.9" y="163" width="1.2" height="17" fill="#6e6e6e"/><rect x="913.0" y="166.5" width="3" height="10" rx="1" fill="#7a7a7a"/><circle cx="931" cy="171" r="5.8" fill="#d0d0d0"/><circle cx="931" cy="171" r="2.2" fill="#444"/><path d="M931 165.2l1.5 4M936.5 169l-4 1.5M934 176l-2-3.5M927 176l2.5-3M925.5 169l4 .5" stroke="#444" stroke-width="1"/><path d="M990 165.5a5.5 5.5 0 0 0 0 11z" fill="#d0d0d0"/><path d="M991 165.5h4.5v11h-4.5a5.5 5.5 0 0 0 0-11z" fill="#d0d0d0"/><circle cx="1049" cy="172" r="5.8" fill="#5ab6c2" stroke="#1d4b58" stroke-width="1.2"/><text x="1049" y="174.5" font-size="5.5" font-family="Liberation Sans" font-weight="bold" text-anchor="middle" fill="#1d4b58">ON</text><path d="M1525.5 147l3 4h-6z" fill="#7cc06a"/><path d="M1520 158l3-5 2 5z" fill="#5b7fe0"/><path d="M1531 158l-3-5-2 5z" fill="#e05b5b"/><path d="M1525.5 151v4l-3 2M1525.5 155l3 2" stroke="#d0d0d0" stroke-width="1"/><path d="M1540 156a6.5 6.5 0 1 1 13 0h-3a3.5 3.5 0 1 0-7 0z" fill="#5ab6c2"/><circle cx="1546.5" cy="155" r="1.5" fill="#333"/><path d="M1560.5 145.5v13h12" fill="none" stroke="#8a8a8a" stroke-width="0.9"/><path d="M1562 157l10-10" stroke="#5ab6c2" stroke-width="1.8"/><path d="M1573 146l-1 5-4-4z" fill="#5ab6c2"/><path d="M1480.4 715l5-5 5 5-5 3z" fill="#d0d0d0"/><path d="M1489 709l2.5 3h-1.7v5h-1.6v-5h-1.7z" fill="#5ab6c2"/><path d="M1504.6 715l5-5 5 5-5 3z" fill="#d0d0d0"/><path d="M1513.2 719l2.5-3h-1.7v-5h-1.6v5h-1.7z" fill="#5ab6c2"/><path d="M1531 715l5-5 5 5-5 3z" fill="#d0d0d0"/><path d="M1540.5 710h5M1543 707.5v5" stroke="#5ab6c2" stroke-width="1.8"/><path d="M1553.6 715l5-5 5 5-5 3z" fill="#d0d0d0"/><circle cx="1563" cy="710" r="3" fill="#5ab6c2"/><rect x="1410" y="886" width="2" height="12" fill="#d0d0d0"/><path d="M1418 886v12l-6-6zM1424 886v12l-6-6z" fill="#d0d0d0"/><rect x="1434" y="886" width="2" height="12" fill="#d0d0d0"/><path d="M1444 886v12l-8-6z" fill="#d0d0d0"/><rect x="1456.5" y="884" width="2" height="16" fill="#e07a3e"/><path d="M1467 886v12l-8-6z" fill="#d0d0d0"/><path d="M1491 884v16l-10-8z" fill="#d0d0d0"/><path d="M1501 884v16l10-8z" fill="#d0d0d0"/><path d="M1523 886v12l8-6z" fill="#d0d0d0"/><rect x="1532" y="884" width="2" height="16" fill="#e07a3e"/><path d="M1546 886v12l8-6z" fill="#d0d0d0"/><rect x="1554.5" y="886" width="2" height="12" fill="#d0d0d0"/><path d="M1566 886v12l6-6zM1572 886v12l6-6z" fill="#d0d0d0"/><rect x="1578.5" y="886" width="2" height="12" fill="#d0d0d0"/><path d="M1119.0 922.5h8l-4.0 5z" fill="none"/><path d="M1119 923h8l-4 5z" fill="none" stroke="#9a9a9a" stroke-width="1"/><path d="M1244.6 923h8l-4 5z" fill="none" stroke="#9a9a9a" stroke-width="1"/><rect x="1103.4" y="918" width="1.2" height="20" fill="#6e6e6e"/><rect x="1102.5" y="923.0" width="3" height="10" rx="1" fill="#7a7a7a"/><rect x="1369.4" y="918" width="1.2" height="20" fill="#6e6e6e"/><rect x="1368.5" y="923.0" width="3" height="10" rx="1" fill="#7a7a7a"/><rect x="1524.4" y="918" width="1.2" height="20" fill="#6e6e6e"/><rect x="1523.5" y="923.0" width="3" height="10" rx="1" fill="#7a7a7a"/><path d="M1468.0 923.0h8l-4.0 5z" fill="#d0d0d0"/><path d="M1497 923.5h10a3 3 0 0 1 0 6h-2M1509 931.5h-10a3 3 0 0 1 0-6h2" fill="none" stroke="#d0d0d0" stroke-width="1.8"/><path d="M1506 920.5l3 3-3 3zM1500 934.5l-3-3 3-3z" fill="#d0d0d0"/><circle cx="1546.7" cy="927.3" r="7" fill="none" stroke="#f2c0c4" stroke-width="1.5" stroke-dasharray="9 2"/><path d="M1546.7 922v10.5M1541.5 927.3h10.5" stroke="#f2c0c4" stroke-width="1.8"/><circle cx="1570.5" cy="920.5" r="2.8" fill="none" stroke="#d0d0d0" stroke-width="1.3"/><circle cx="1577" cy="922" r="2" fill="#e88a3a"/><path d="M1575 925l-3 5 4 2-2 4M1575 926l4 2 3-1M1572 930l-3 1" fill="none" stroke="#e88a3a" stroke-width="1.8"/><rect x="1569" y="951.7" width="18" height="18.3" fill="#cfcfcf"/><rect x="1569" y="955" width="18" height="1" fill="#444"/><text x="1578" y="967" font-size="9" font-family="Liberation Sans" font-weight="bold" text-anchor="middle" fill="#222">{;}</text><path d="M1582 998l12-12M1586 998l8-8M1590 998l4-4" stroke="#222" stroke-width="1"/></svg>
</body></html>
